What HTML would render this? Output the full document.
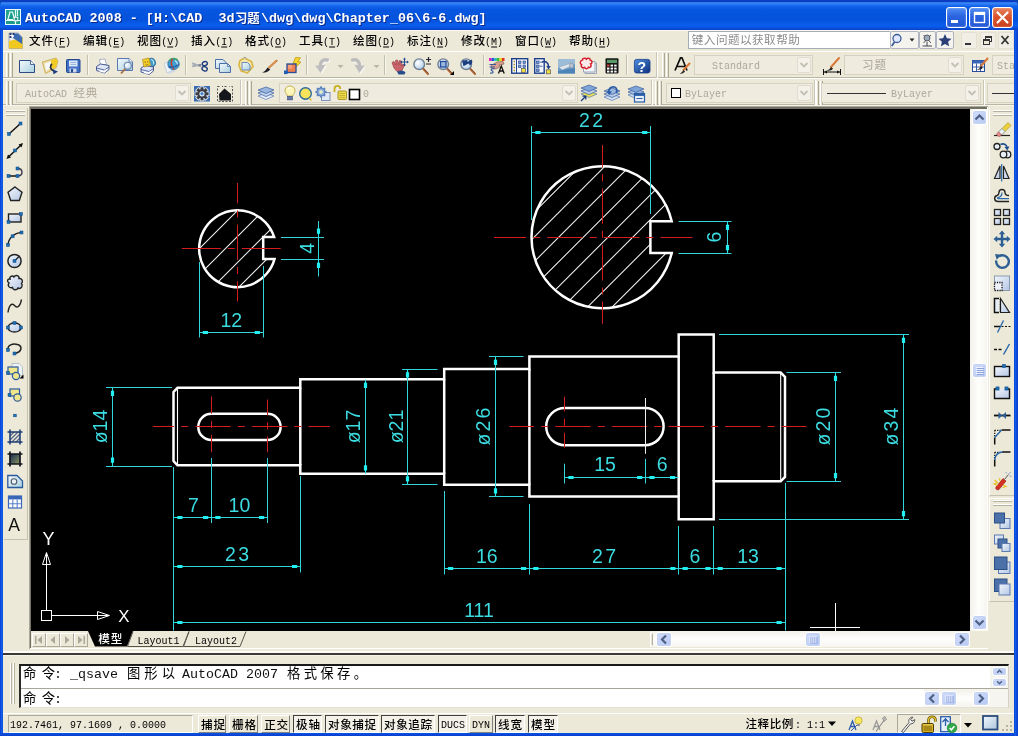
<!DOCTYPE html>
<html><head><meta charset="utf-8"><title>AutoCAD 2008</title>
<style>
html,body{margin:0;padding:0;background:#ece9d8;}
body{width:1018px;height:736px;overflow:hidden;position:relative;font-family:"Liberation Mono",monospace;font-size:10px;}
#root{position:absolute;left:0;top:0;width:1018px;height:736px;overflow:hidden;background:#ece9d8;}
#root div{position:absolute;box-sizing:border-box;}
svg{position:absolute;left:0;top:0;will-change:transform;}
text{white-space:pre;}
</style></head><body><div id="root">
<div style="left:0px;top:0px;width:1018px;height:30px;background:linear-gradient(180deg,#0a3cc4 0px,#0a3cc4 1.5px,#3c8cfa 2.8px,#2c7cf4 4px,#0f60ea 6.5px,#0756e1 10px,#0553dc 20px,#0a5eee 25.5px,#0a52de 28px,#083fc4 30px);"></div><div style="left:0px;top:30px;width:3px;height:706px;background:linear-gradient(90deg,#0a3fd0,#1360ee 60%,#0a50de);"></div><div style="left:1014px;top:30px;width:4px;height:706px;background:linear-gradient(90deg,#0a50de,#1360ee 40%,#0a3fd0);"></div><div style="left:0px;top:733px;width:1018px;height:3px;background:linear-gradient(180deg,#0a52e0,#0a3fd0);"></div><div style="left:946px;top:7px;width:21px;height:21px;background:linear-gradient(180deg,#4f8df5 0%,#2a62e0 45%,#2458d4 100%);border:1px solid #fff;border-radius:3px;box-shadow:inset 0 0 2px rgba(255,255,255,.5);"></div><div style="left:969px;top:7px;width:21px;height:21px;background:linear-gradient(180deg,#4f8df5 0%,#2a62e0 45%,#2458d4 100%);border:1px solid #fff;border-radius:3px;box-shadow:inset 0 0 2px rgba(255,255,255,.5);"></div><div style="left:992px;top:7px;width:21px;height:21px;background:linear-gradient(180deg,#e9845e 0%,#d9542c 45%,#c8401c 100%);border:1px solid #fff;border-radius:3px;box-shadow:inset 0 0 2px rgba(255,255,255,.5);"></div><div style="left:3px;top:30px;width:1011px;height:21px;background:#ece9d8;border-top:1px solid #fbfaf5;"></div><div style="left:688px;top:31px;width:202px;height:18px;background:#fff;border:1px solid #a5acb2;border-right:none;"></div><div style="left:890px;top:31px;width:29px;height:18px;background:#f4f3ee;border:1px solid #b0b4c0;border-radius:2px;"></div><div style="left:919px;top:31px;width:17px;height:18px;background:#f4f3ee;border:1px solid #b0b4c0;border-radius:2px;"></div><div style="left:936px;top:31px;width:18px;height:18px;background:#f4f3ee;border:1px solid #b0b4c0;border-radius:2px;"></div><div style="left:961px;top:32px;width:16px;height:17px;background:#f1efe5;border:1px solid #e4e1d4;border-radius:2px;"></div><div style="left:980px;top:32px;width:16px;height:17px;background:#f1efe5;border:1px solid #e4e1d4;border-radius:2px;"></div><div style="left:998px;top:32px;width:16px;height:17px;background:#f1efe5;border:1px solid #e4e1d4;border-radius:2px;"></div><div style="left:3px;top:51px;width:1011px;height:27px;background:#ece9d8;border-top:1px solid #fff;border-bottom:1px solid #b9b6a3;"></div><div style="left:3px;top:78px;width:1011px;height:27px;background:#ece9d8;border-top:1px solid #fff;border-bottom:1px solid #b9b6a3;"></div><div style="left:6px;top:53px;width:1px;height:24px;background:#fff;"></div><div style="left:7px;top:53px;width:1px;height:24px;background:#e6e3d3;"></div><div style="left:8px;top:53px;width:1px;height:24px;background:#a9a692;"></div><div style="left:10px;top:53px;width:1px;height:24px;background:#fff;"></div><div style="left:11px;top:53px;width:1px;height:24px;background:#e6e3d3;"></div><div style="left:12px;top:53px;width:1px;height:24px;background:#a9a692;"></div><div style="left:6px;top:81px;width:1px;height:24px;background:#fff;"></div><div style="left:7px;top:81px;width:1px;height:24px;background:#e6e3d3;"></div><div style="left:8px;top:81px;width:1px;height:24px;background:#a9a692;"></div><div style="left:10px;top:81px;width:1px;height:24px;background:#fff;"></div><div style="left:11px;top:81px;width:1px;height:24px;background:#e6e3d3;"></div><div style="left:12px;top:81px;width:1px;height:24px;background:#a9a692;"></div><div style="left:87px;top:55px;width:1px;height:20px;background:#c2bfad;"></div><div style="left:88px;top:55px;width:1px;height:20px;background:#f7f6ef;"></div><div style="left:185px;top:55px;width:1px;height:20px;background:#c2bfad;"></div><div style="left:186px;top:55px;width:1px;height:20px;background:#f7f6ef;"></div><div style="left:306px;top:55px;width:1px;height:20px;background:#c2bfad;"></div><div style="left:307px;top:55px;width:1px;height:20px;background:#f7f6ef;"></div><div style="left:384px;top:55px;width:1px;height:20px;background:#c2bfad;"></div><div style="left:385px;top:55px;width:1px;height:20px;background:#f7f6ef;"></div><div style="left:483px;top:55px;width:1px;height:20px;background:#c2bfad;"></div><div style="left:484px;top:55px;width:1px;height:20px;background:#f7f6ef;"></div><div style="left:626px;top:55px;width:1px;height:20px;background:#c2bfad;"></div><div style="left:627px;top:55px;width:1px;height:20px;background:#f7f6ef;"></div><div style="left:656px;top:52px;width:1px;height:26px;background:#c9c6b5;"></div><div style="left:657px;top:52px;width:1px;height:26px;background:#fff;"></div><div style="left:662px;top:53px;width:1px;height:24px;background:#fff;"></div><div style="left:663px;top:53px;width:1px;height:24px;background:#e6e3d3;"></div><div style="left:664px;top:53px;width:1px;height:24px;background:#a9a692;"></div><div style="left:666px;top:53px;width:1px;height:24px;background:#fff;"></div><div style="left:667px;top:53px;width:1px;height:24px;background:#e6e3d3;"></div><div style="left:668px;top:53px;width:1px;height:24px;background:#a9a692;"></div><div style="left:240px;top:80px;width:1px;height:26px;background:#c9c6b5;"></div><div style="left:241px;top:80px;width:1px;height:26px;background:#fff;"></div><div style="left:245px;top:81px;width:1px;height:24px;background:#fff;"></div><div style="left:246px;top:81px;width:1px;height:24px;background:#e6e3d3;"></div><div style="left:247px;top:81px;width:1px;height:24px;background:#a9a692;"></div><div style="left:249px;top:81px;width:1px;height:24px;background:#fff;"></div><div style="left:250px;top:81px;width:1px;height:24px;background:#e6e3d3;"></div><div style="left:251px;top:81px;width:1px;height:24px;background:#a9a692;"></div><div style="left:651px;top:80px;width:1px;height:26px;background:#c9c6b5;"></div><div style="left:652px;top:80px;width:1px;height:26px;background:#fff;"></div><div style="left:655px;top:81px;width:1px;height:24px;background:#fff;"></div><div style="left:656px;top:81px;width:1px;height:24px;background:#e6e3d3;"></div><div style="left:657px;top:81px;width:1px;height:24px;background:#a9a692;"></div><div style="left:659px;top:81px;width:1px;height:24px;background:#fff;"></div><div style="left:660px;top:81px;width:1px;height:24px;background:#e6e3d3;"></div><div style="left:661px;top:81px;width:1px;height:24px;background:#a9a692;"></div><div style="left:814px;top:80px;width:1px;height:26px;background:#c9c6b5;"></div><div style="left:815px;top:80px;width:1px;height:26px;background:#fff;"></div><div style="left:816px;top:81px;width:1px;height:24px;background:#fff;"></div><div style="left:817px;top:81px;width:1px;height:24px;background:#e6e3d3;"></div><div style="left:818px;top:81px;width:1px;height:24px;background:#a9a692;"></div><div style="left:820px;top:81px;width:1px;height:24px;background:#fff;"></div><div style="left:821px;top:81px;width:1px;height:24px;background:#e6e3d3;"></div><div style="left:822px;top:81px;width:1px;height:24px;background:#a9a692;"></div><div style="left:983px;top:80px;width:1px;height:26px;background:#c9c6b5;"></div><div style="left:984px;top:80px;width:1px;height:26px;background:#fff;"></div><div style="left:16px;top:83px;width:175px;height:20px;background:#efecdf;border:1px solid #d6d2c2;"></div><div style="left:175px;top:85px;width:14px;height:16px;background:#f3f1e8;border:1px solid #e0ddd0;border-radius:2px;"></div><div style="left:279px;top:83px;width:299px;height:20px;background:#efecdf;border:1px solid #d6d2c2;"></div><div style="left:562px;top:85px;width:14px;height:16px;background:#f3f1e8;border:1px solid #e0ddd0;border-radius:2px;"></div><div style="left:694px;top:55px;width:119px;height:20px;background:#efecdf;border:1px solid #d6d2c2;"></div><div style="left:797px;top:57px;width:14px;height:16px;background:#f3f1e8;border:1px solid #e0ddd0;border-radius:2px;"></div><div style="left:844px;top:55px;width:120px;height:20px;background:#efecdf;border:1px solid #d6d2c2;"></div><div style="left:948px;top:57px;width:14px;height:16px;background:#f3f1e8;border:1px solid #e0ddd0;border-radius:2px;"></div><div style="left:992px;top:55px;width:30px;height:20px;background:#efecdf;border:1px solid #d6d2c2;"></div><div style="left:666px;top:83px;width:147px;height:20px;background:#efecdf;border:1px solid #d6d2c2;"></div><div style="left:797px;top:85px;width:14px;height:16px;background:#f3f1e8;border:1px solid #e0ddd0;border-radius:2px;"></div><div style="left:821px;top:83px;width:160px;height:20px;background:#efecdf;border:1px solid #d6d2c2;"></div><div style="left:965px;top:85px;width:14px;height:16px;background:#f3f1e8;border:1px solid #e0ddd0;border-radius:2px;"></div><div style="left:987px;top:83px;width:40px;height:20px;background:#efecdf;border:1px solid #d6d2c2;"></div><div style="left:3px;top:106px;width:26px;height:604px;background:#ece9d8;"></div><div style="left:3px;top:105px;width:1011px;height:1px;background:#f6f4ec;"></div><div style="left:4px;top:108px;width:24px;height:432px;background:#ece9d8;border-right:1px solid #c5c2b0;border-bottom:1px solid #c5c2b0;"></div><div style="left:6px;top:110px;width:19px;height:1px;background:#fff;"></div><div style="left:6px;top:111px;width:19px;height:1px;background:#b5b2a0;"></div><div style="left:6px;top:114px;width:19px;height:1px;background:#fff;"></div><div style="left:6px;top:115px;width:19px;height:1px;background:#b5b2a0;"></div><div style="left:988px;top:106px;width:26px;height:604px;background:#ece9d8;"></div><div style="left:989px;top:108px;width:25px;height:388px;background:#ece9d8;border-left:1px solid #fff;border-bottom:1px solid #c5c2b0;"></div><div style="left:993px;top:110px;width:19px;height:1px;background:#fff;"></div><div style="left:993px;top:111px;width:19px;height:1px;background:#b5b2a0;"></div><div style="left:993px;top:114px;width:19px;height:1px;background:#fff;"></div><div style="left:993px;top:115px;width:19px;height:1px;background:#b5b2a0;"></div><div style="left:989px;top:498px;width:25px;height:104px;background:#ece9d8;border-left:1px solid #fff;border-bottom:1px solid #c5c2b0;border-top:1px solid #fff;"></div><div style="left:993px;top:500px;width:19px;height:1px;background:#fff;"></div><div style="left:993px;top:501px;width:19px;height:1px;background:#b5b2a0;"></div><div style="left:993px;top:504px;width:19px;height:1px;background:#fff;"></div><div style="left:993px;top:505px;width:19px;height:1px;background:#b5b2a0;"></div><div style="left:29px;top:106px;width:959px;height:543px;background:#fff;border-left:1px solid #aca899;border-top:1px solid #aca899;"></div><div style="left:30px;top:107px;width:957px;height:541px;background:#716f64;"></div><div style="left:31px;top:109px;width:939px;height:522px;background:#000;"></div><div style="left:970px;top:109px;width:17px;height:522px;background:linear-gradient(90deg,#f3f1ea,#fefefd 50%,#f6f5ef);"></div><div style="left:972px;top:110px;width:15px;height:15px;background:linear-gradient(135deg,#d0dcfb,#b9c9f3);border:1px solid #fff;border-radius:3px;box-shadow:0 0 0 1px #c5d2f0 inset;"></div><div style="left:972px;top:615px;width:15px;height:15px;background:linear-gradient(135deg,#d0dcfb,#b9c9f3);border:1px solid #fff;border-radius:3px;box-shadow:0 0 0 1px #c5d2f0 inset;"></div><div style="left:972px;top:363px;width:15px;height:15px;background:linear-gradient(135deg,#d0dcfb,#b9c9f3);border:1px solid #fff;border-radius:3px;box-shadow:0 0 0 1px #c5d2f0 inset;"></div><div style="left:31px;top:631px;width:957px;height:17px;background:#ece9d8;"></div><div style="left:650px;top:631px;width:320px;height:16px;background:linear-gradient(180deg,#f3f1ea,#fefefd 50%,#f6f5ef);"></div><div style="left:650px;top:633px;width:3px;height:13px;background:#e4e1d2;border:1px solid #fff;border-right:1px solid #b5b2a0;"></div><div style="left:656px;top:632px;width:16px;height:15px;background:linear-gradient(135deg,#d0dcfb,#b9c9f3);border:1px solid #fff;border-radius:3px;box-shadow:0 0 0 1px #c5d2f0 inset;"></div><div style="left:954px;top:632px;width:16px;height:15px;background:linear-gradient(135deg,#d0dcfb,#b9c9f3);border:1px solid #fff;border-radius:3px;box-shadow:0 0 0 1px #c5d2f0 inset;"></div><div style="left:805px;top:632px;width:16px;height:15px;background:linear-gradient(135deg,#d0dcfb,#b9c9f3);border:1px solid #fff;border-radius:3px;box-shadow:0 0 0 1px #c5d2f0 inset;"></div><div style="left:970px;top:631px;width:18px;height:17px;background:#ece9d8;"></div><div style="left:32px;top:633px;width:14px;height:14px;background:#ece9d8;border:1px solid #fff;border-right-color:#aca899;border-bottom-color:#aca899;"></div><div style="left:46px;top:633px;width:14px;height:14px;background:#ece9d8;border:1px solid #fff;border-right-color:#aca899;border-bottom-color:#aca899;"></div><div style="left:60px;top:633px;width:14px;height:14px;background:#ece9d8;border:1px solid #fff;border-right-color:#aca899;border-bottom-color:#aca899;"></div><div style="left:74px;top:633px;width:14px;height:14px;background:#ece9d8;border:1px solid #fff;border-right-color:#aca899;border-bottom-color:#aca899;"></div><div style="left:3px;top:649px;width:1011px;height:64px;background:#ece9d8;"></div><div style="left:3px;top:651px;width:1011px;height:2px;background:#fdfcf8;"></div><div style="left:3px;top:653px;width:1011px;height:2px;background:#3c3a34;"></div><div style="left:3px;top:655px;width:1011px;height:1px;background:#f6f4ea;"></div><div style="left:10px;top:663px;width:1px;height:41px;background:#fff;"></div><div style="left:11px;top:663px;width:1px;height:41px;background:#b5b2a0;"></div><div style="left:13px;top:663px;width:1px;height:41px;background:#fff;"></div><div style="left:14px;top:663px;width:1px;height:41px;background:#b5b2a0;"></div><div style="left:19px;top:664px;width:990px;height:44px;background:#fff;border-left:2px solid #2a2a26;border-top:2px solid #1a1a18;border-right:1px solid #d4d0c8;border-bottom:1px solid #e4e1d6;"></div><div style="left:21px;top:688px;width:987px;height:1px;background:#a8a69a;"></div><div style="left:990px;top:666px;width:18px;height:22px;background:#f6f5ef;"></div><div style="left:992px;top:667px;width:15px;height:9px;background:linear-gradient(135deg,#d0dcfb,#b9c9f3);border:1px solid #fff;border-radius:3px;box-shadow:0 0 0 1px #c5d2f0 inset;"></div><div style="left:992px;top:678px;width:15px;height:9px;background:linear-gradient(135deg,#d0dcfb,#b9c9f3);border:1px solid #fff;border-radius:3px;box-shadow:0 0 0 1px #c5d2f0 inset;"></div><div style="left:924px;top:689px;width:84px;height:18px;background:#f6f5ef;"></div><div style="left:924px;top:690px;width:66px;height:16px;background:linear-gradient(180deg,#f3f1ea,#fefefd 50%,#f6f5ef);"></div><div style="left:924px;top:691px;width:16px;height:15px;background:linear-gradient(135deg,#d0dcfb,#b9c9f3);border:1px solid #fff;border-radius:3px;box-shadow:0 0 0 1px #c5d2f0 inset;"></div><div style="left:941px;top:691px;width:16px;height:15px;background:linear-gradient(135deg,#d0dcfb,#b9c9f3);border:1px solid #fff;border-radius:3px;box-shadow:0 0 0 1px #c5d2f0 inset;"></div><div style="left:973px;top:691px;width:16px;height:15px;background:linear-gradient(135deg,#d0dcfb,#b9c9f3);border:1px solid #fff;border-radius:3px;box-shadow:0 0 0 1px #c5d2f0 inset;"></div><div style="left:3px;top:713px;width:1011px;height:20px;background:#ece9d8;border-top:1px solid #fff;"></div><div style="left:8px;top:715px;width:185px;height:18px;border:1px solid #aca899;border-right-color:#fff;border-bottom-color:#fff;"></div><div style="left:198px;top:715px;width:28px;height:18px;border:1px solid #fff;border-right-color:#808080;border-bottom-color:#808080;"></div><div style="left:229px;top:715px;width:29px;height:18px;border:1px solid #fff;border-right-color:#808080;border-bottom-color:#808080;"></div><div style="left:261px;top:715px;width:29px;height:18px;border:1px solid #fff;border-right-color:#808080;border-bottom-color:#808080;"></div><div style="left:293px;top:715px;width:29px;height:18px;border:1px solid #404040;border-right-color:#fff;border-bottom-color:#fff;background:#f4f2e8;"></div><div style="left:325px;top:715px;width:54px;height:18px;border:1px solid #404040;border-right-color:#fff;border-bottom-color:#fff;background:#f4f2e8;"></div><div style="left:381px;top:715px;width:54px;height:18px;border:1px solid #404040;border-right-color:#fff;border-bottom-color:#fff;background:#f4f2e8;"></div><div style="left:438px;top:715px;width:29px;height:18px;border:1px solid #404040;border-right-color:#fff;border-bottom-color:#fff;background:#f4f2e8;"></div><div style="left:469px;top:715px;width:24px;height:18px;border:1px solid #fff;border-right-color:#808080;border-bottom-color:#808080;"></div><div style="left:495px;top:715px;width:30px;height:18px;border:1px solid #404040;border-right-color:#fff;border-bottom-color:#fff;background:#f4f2e8;"></div><div style="left:528px;top:715px;width:30px;height:18px;border:1px solid #404040;border-right-color:#fff;border-bottom-color:#fff;background:#f4f2e8;"></div><div style="left:897px;top:714px;width:64px;height:19px;border:1px solid #aca899;border-right-color:#fff;border-bottom-color:#fff;"></div><div style="left:0px;top:30px;width:3px;height:706px;background:linear-gradient(90deg,#0a3fd0,#1360ee 60%,#0a50de);"></div><div style="left:1014px;top:30px;width:4px;height:706px;background:linear-gradient(90deg,#0a50de,#1360ee 40%,#0a3fd0);"></div><div style="left:0px;top:733px;width:1018px;height:3px;background:linear-gradient(180deg,#0a52e0,#0a3fd0);"></div>
<svg id="dwg" width="1018" height="736" viewBox="0 0 1018 736">
<g fill="none"><clipPath id="h1"><path d="M274.1 237.0A38.4 38.4 0 1 0 274.5 259.1H263.2V237.0Z"/></clipPath><path d="M195 253.0L280 168.0M195 279.0L280 194.0M195 305.0L280 220.0M195 331.0L280 246.0" stroke="#f4f4f4" stroke-width="1.05" clip-path="url(#h1)"/><path d="M274.1 237.0A38.4 38.4 0 1 0 274.5 259.1H263.2V237.0Z" stroke="#ffffff" stroke-width="2.5" stroke-linejoin="miter"/><path d="M181.9 248.5H220.7M227.8 248.5H234.8M241.9 248.5H280.7" stroke="#d41e1e" stroke-width="1"/><path d="M237.5 183.0V203.3M237.5 210.4V217.5M237.5 224.6V259.9M237.5 267.0V274.1M237.5 281.2V301.5" stroke="#d41e1e" stroke-width="1"/><path d="M199.5 262.0 V337.5" stroke="#35d6da" stroke-width="1"/><path d="M263.5 266.0 V337.5" stroke="#35d6da" stroke-width="1"/><path d="M199.0 332.5 H263.5" stroke="#35d6da" stroke-width="1"/><path d="M199.5 332.5 L202.5 333.1 L203.1 334.1 L208.0 334.1 L208.0 330.9 L203.1 330.9 L202.5 331.9Z" fill="#22eef0"/><path d="M263.2 332.5 L260.2 333.1 L259.6 334.1 L254.7 334.1 L254.7 330.9 L259.6 330.9 L260.2 331.9Z" fill="#22eef0"/><text transform="translate(231.3 319.6)" x="0" y="7" text-anchor="middle" fill="#3bdbe0" stroke="none" style="font-family:'Liberation Sans',sans-serif;font-size:19.5px;">12</text><path d="M281.0 237.5 H324.0" stroke="#35d6da" stroke-width="1"/><path d="M281.0 259.5 H324.0" stroke="#35d6da" stroke-width="1"/><path d="M318.5 221.0 V276.5" stroke="#35d6da" stroke-width="1"/><path d="M318.5 237.0 L319.1 234.0 L320.1 233.4 L320.1 228.5 L316.9 228.5 L316.9 233.4 L317.9 234.0Z" fill="#22eef0"/><path d="M318.5 259.5 L319.1 262.5 L320.1 263.1 L320.1 268.0 L316.9 268.0 L316.9 263.1 L317.9 262.5Z" fill="#22eef0"/><text transform="translate(307.2 248.3) rotate(-90)" x="0" y="7" text-anchor="middle" fill="#3bdbe0" stroke="none" style="font-family:'Liberation Sans',sans-serif;font-size:19.5px;">4</text><clipPath id="h2"><path d="M671.7 221.3A71.0 71.0 0 1 0 671.7 253.1H650.4V221.3Z"/></clipPath><path d="M525 221.5L680 66.5M525 246.2L680 91.2M525 270.9L680 115.9M525 295.5L680 140.5M525 320.2L680 165.2M525 344.9L680 189.9M525 369.6L680 214.6M525 394.2L680 239.2" stroke="#f4f4f4" stroke-width="1.05" clip-path="url(#h2)"/><path d="M671.7 221.3A71.0 71.0 0 1 0 671.7 253.1H650.4V221.3Z" stroke="#ffffff" stroke-width="2.5" stroke-linejoin="miter"/><path d="M494.0 237.5H526.0M533.1 237.5H540.2M547.2 237.5H582.6M589.7 237.5H596.8M603.9 237.5H639.3M646.3 237.5H653.4M660.5 237.5H692.5" stroke="#d41e1e" stroke-width="1"/><path d="M602.5 145.0V167.2M602.5 174.3V181.3M602.5 188.4V223.8M602.5 230.9V237.9M602.5 245.0V280.4M602.5 287.5V294.5M602.5 301.6V323.8" stroke="#d41e1e" stroke-width="1"/><path d="M531.5 126.0 V220.0" stroke="#35d6da" stroke-width="1"/><path d="M650.5 126.0 V214.0" stroke="#35d6da" stroke-width="1"/><path d="M531.5 132.5 H651.0" stroke="#35d6da" stroke-width="1"/><path d="M532.0 132.5 L535.0 133.1 L535.6 134.1 L540.5 134.1 L540.5 130.9 L535.6 130.9 L535.0 131.9Z" fill="#22eef0"/><path d="M650.6 132.5 L647.6 133.1 L647.0 134.1 L642.1 134.1 L642.1 130.9 L647.0 130.9 L647.6 131.9Z" fill="#22eef0"/><text transform="translate(591.0 119.6)" x="-12" y="7" textLength="24" lengthAdjust="spacing" fill="#3bdbe0" stroke="none" style="font-family:'Liberation Sans',sans-serif;font-size:19.5px;">22</text><path d="M678.5 221.5 H731.5" stroke="#35d6da" stroke-width="1"/><path d="M678.5 253.5 H731.5" stroke="#35d6da" stroke-width="1"/><path d="M727.5 221.0 V253.5" stroke="#35d6da" stroke-width="1"/><path d="M727.5 221.5 L728.0 224.5 L729.1 225.1 L729.1 230.0 L725.9 230.0 L725.9 225.1 L727.0 224.5Z" fill="#22eef0"/><path d="M727.5 253.5 L728.0 250.5 L729.1 249.9 L729.1 245.0 L725.9 245.0 L725.9 249.9 L727.0 250.5Z" fill="#22eef0"/><text transform="translate(714.0 237.0) rotate(-90)" x="0" y="7" text-anchor="middle" fill="#3bdbe0" stroke="none" style="font-family:'Liberation Sans',sans-serif;font-size:19.5px;">6</text><path d="M173.5 392L177.5 387.8H300.3V379.3H444.2V369H529.4V356.5H678.7V334.4H713.7V372.6H780.7L785 377V477L780.7 481.3H713.7V519.3H678.7V496.6H529.4V484.7H444.2V473.8H300.3V465.3H177.5L173.5 461Z" stroke="#ffffff" stroke-width="2.5" stroke-linejoin="miter"/><path d="M300.3 387.8V465.3M444.2 379.3V473.8M529.4 369V484.7M678.7 356.5V496.6M713.7 372.6V481.3" stroke="#ffffff" stroke-width="2.5"/><path d="M177.5 388V465M780.7 373V481" stroke="#ffffff" stroke-width="1.1"/><path d="M211.4 413.8H267.5A13.10 13.10 0 0 1 267.5 440.0H211.4A13.10 13.10 0 0 1 211.4 413.8Z" stroke="#ffffff" stroke-width="2.5"/><path d="M564.8 408.0H645.0A18.60 18.60 0 0 1 645.0 445.2H564.8A18.60 18.60 0 0 1 564.8 408.0Z" stroke="#ffffff" stroke-width="2.5"/><path d="M152.9 426.5H174.1M181.2 426.5H188.2M195.3 426.5H230.7M237.8 426.5H244.8M251.9 426.5H287.3M294.4 426.5H301.4M308.5 426.5H329.7" stroke="#d41e1e" stroke-width="1"/><path d="M509.4 426.5H534.1M541.2 426.5H548.3M555.3 426.5H590.7M597.8 426.5H604.9M611.9 426.5H647.3M654.4 426.5H661.5M668.6 426.5H704.0M711.0 426.5H718.1M725.2 426.5H760.6M767.6 426.5H774.7M781.8 426.5H806.5" stroke="#d41e1e" stroke-width="1"/><path d="M211.5 396.5V413.8M211.5 420.9V427.9M211.5 435.0V452.3" stroke="#d41e1e" stroke-width="1"/><path d="M267.5 399.5V415.3M267.5 422.4V429.4M267.5 436.5V452.3" stroke="#d41e1e" stroke-width="1"/><path d="M564.5 396.6V411.5M564.5 418.6V425.7M564.5 432.8V447.7" stroke="#d41e1e" stroke-width="1"/><path d="M645.5 398.0 V453.8" stroke="#f0f0f0" stroke-width="1"/><path d="M112.5 387.5 V466.0" stroke="#35d6da" stroke-width="1"/><path d="M112.5 387.5 L113.0 390.5 L114.1 391.1 L114.1 396.0 L110.9 396.0 L110.9 391.1 L112.0 390.5Z" fill="#22eef0"/><path d="M112.5 466.0 L113.0 463.0 L114.1 462.4 L114.1 457.5 L110.9 457.5 L110.9 462.4 L112.0 463.0Z" fill="#22eef0"/><path d="M106.0 387.5 H172.0" stroke="#35d6da" stroke-width="1"/><path d="M106.0 466.5 H172.0" stroke="#35d6da" stroke-width="1"/><text transform="translate(100.0 426.5) rotate(-90)" x="0" y="7" text-anchor="middle" fill="#3bdbe0" stroke="none" style="font-family:'Liberation Sans',sans-serif;font-size:19.5px;">ø14</text><path d="M365.5 379.5 V473.8" stroke="#35d6da" stroke-width="1"/><path d="M365.5 379.5 L366.1 382.5 L367.1 383.1 L367.1 388.0 L363.9 388.0 L363.9 383.1 L364.9 382.5Z" fill="#22eef0"/><path d="M365.5 473.8 L366.1 470.8 L367.1 470.2 L367.1 465.3 L363.9 465.3 L363.9 470.2 L364.9 470.8Z" fill="#22eef0"/><text transform="translate(352.6 426.5) rotate(-90)" x="0" y="7" text-anchor="middle" fill="#3bdbe0" stroke="none" style="font-family:'Liberation Sans',sans-serif;font-size:19.5px;">ø17</text><path d="M407.5 369.0 V484.7" stroke="#35d6da" stroke-width="1"/><path d="M407.5 369.0 L408.1 372.0 L409.1 372.6 L409.1 377.5 L405.9 377.5 L405.9 372.6 L406.9 372.0Z" fill="#22eef0"/><path d="M407.5 484.7 L408.1 481.7 L409.1 481.1 L409.1 476.2 L405.9 476.2 L405.9 481.1 L406.9 481.7Z" fill="#22eef0"/><path d="M402.0 369.5 H437.5" stroke="#35d6da" stroke-width="1"/><path d="M402.0 484.5 H437.5" stroke="#35d6da" stroke-width="1"/><text transform="translate(396.0 426.5) rotate(-90)" x="0" y="7" text-anchor="middle" fill="#3bdbe0" stroke="none" style="font-family:'Liberation Sans',sans-serif;font-size:19.5px;">ø21</text><path d="M495.5 356.5 V496.8" stroke="#35d6da" stroke-width="1"/><path d="M495.5 356.5 L496.1 359.5 L497.1 360.1 L497.1 365.0 L493.9 365.0 L493.9 360.1 L494.9 359.5Z" fill="#22eef0"/><path d="M495.5 496.8 L496.1 493.8 L497.1 493.2 L497.1 488.3 L493.9 488.3 L493.9 493.2 L494.9 493.8Z" fill="#22eef0"/><path d="M489.0 356.5 H523.5" stroke="#35d6da" stroke-width="1"/><path d="M489.0 496.5 H523.5" stroke="#35d6da" stroke-width="1"/><text transform="translate(482.8 426.5) rotate(-90)" x="-18.9" y="7" textLength="37.8" lengthAdjust="spacing" fill="#3bdbe0" stroke="none" style="font-family:'Liberation Sans',sans-serif;font-size:19.5px;">ø26</text><path d="M835.5 372.6 V481.5" stroke="#35d6da" stroke-width="1"/><path d="M835.5 372.6 L836.0 375.6 L837.1 376.2 L837.1 381.1 L833.9 381.1 L833.9 376.2 L835.0 375.6Z" fill="#22eef0"/><path d="M835.5 481.5 L836.0 478.5 L837.1 477.9 L837.1 473.0 L833.9 473.0 L833.9 477.9 L835.0 478.5Z" fill="#22eef0"/><path d="M786.5 372.5 H841.0" stroke="#35d6da" stroke-width="1"/><path d="M786.5 481.5 H841.0" stroke="#35d6da" stroke-width="1"/><text transform="translate(823.3 426.5) rotate(-90)" x="-18.9" y="7" textLength="37.8" lengthAdjust="spacing" fill="#3bdbe0" stroke="none" style="font-family:'Liberation Sans',sans-serif;font-size:19.5px;">ø20</text><path d="M903.5 334.4 V519.5" stroke="#35d6da" stroke-width="1"/><path d="M903.5 334.4 L904.0 337.4 L905.1 338.0 L905.1 342.9 L901.9 342.9 L901.9 338.0 L903.0 337.4Z" fill="#22eef0"/><path d="M903.5 519.5 L904.0 516.5 L905.1 515.9 L905.1 511.0 L901.9 511.0 L901.9 515.9 L903.0 516.5Z" fill="#22eef0"/><path d="M719.0 334.5 H909.0" stroke="#35d6da" stroke-width="1"/><path d="M719.0 519.5 H909.0" stroke="#35d6da" stroke-width="1"/><text transform="translate(891.2 426.5) rotate(-90)" x="-18.9" y="7" textLength="37.8" lengthAdjust="spacing" fill="#3bdbe0" stroke="none" style="font-family:'Liberation Sans',sans-serif;font-size:19.5px;">ø34</text><path d="M173.5 467.0 V630.5" stroke="#35d6da" stroke-width="1"/><path d="M211.5 458.0 V523.0" stroke="#35d6da" stroke-width="1"/><path d="M267.5 458.0 V523.0" stroke="#35d6da" stroke-width="1"/><path d="M173.5 517.5 H211.5" stroke="#35d6da" stroke-width="1"/><path d="M174.0 517.5 L177.0 518.0 L177.6 519.1 L182.5 519.1 L182.5 515.9 L177.6 515.9 L177.0 517.0Z" fill="#22eef0"/><path d="M211.5 517.5 L208.5 518.0 L207.9 519.1 L203.0 519.1 L203.0 515.9 L207.9 515.9 L208.5 517.0Z" fill="#22eef0"/><text transform="translate(193.3 504.6)" x="0" y="7" text-anchor="middle" fill="#3bdbe0" stroke="none" style="font-family:'Liberation Sans',sans-serif;font-size:19.5px;">7</text><path d="M211.5 517.5 H267.5" stroke="#35d6da" stroke-width="1"/><path d="M212.0 517.5 L215.0 518.0 L215.6 519.1 L220.5 519.1 L220.5 515.9 L215.6 515.9 L215.0 517.0Z" fill="#22eef0"/><path d="M267.5 517.5 L264.5 518.0 L263.9 519.1 L259.0 519.1 L259.0 515.9 L263.9 515.9 L264.5 517.0Z" fill="#22eef0"/><text transform="translate(239.4 504.6)" x="0" y="7" text-anchor="middle" fill="#3bdbe0" stroke="none" style="font-family:'Liberation Sans',sans-serif;font-size:19.5px;">10</text><path d="M300.5 476.0 V572.5" stroke="#35d6da" stroke-width="1"/><path d="M173.5 566.5 H300.5" stroke="#35d6da" stroke-width="1"/><path d="M174.0 566.5 L177.0 567.0 L177.6 568.1 L182.5 568.1 L182.5 564.9 L177.6 564.9 L177.0 566.0Z" fill="#22eef0"/><path d="M300.5 566.5 L297.5 567.0 L296.9 568.1 L292.0 568.1 L292.0 564.9 L296.9 564.9 L297.5 566.0Z" fill="#22eef0"/><text transform="translate(237.0 554.3)" x="-12" y="7" textLength="24" lengthAdjust="spacing" fill="#3bdbe0" stroke="none" style="font-family:'Liberation Sans',sans-serif;font-size:19.5px;">23</text><path d="M564.5 463.7 V483.5" stroke="#35d6da" stroke-width="1"/><path d="M645.5 458.8 V483.5" stroke="#35d6da" stroke-width="1"/><path d="M564.6 477.5 H645.6" stroke="#35d6da" stroke-width="1"/><path d="M565.1 477.5 L568.1 478.1 L568.7 479.1 L573.6 479.1 L573.6 475.9 L568.7 475.9 L568.1 476.9Z" fill="#22eef0"/><path d="M645.6 477.5 L642.6 478.1 L642.0 479.1 L637.1 479.1 L637.1 475.9 L642.0 475.9 L642.6 476.9Z" fill="#22eef0"/><text transform="translate(605.0 464.3)" x="0" y="7" text-anchor="middle" fill="#3bdbe0" stroke="none" style="font-family:'Liberation Sans',sans-serif;font-size:19.5px;">15</text><path d="M645.6 477.5 H678.5" stroke="#35d6da" stroke-width="1"/><path d="M646.1 477.5 L649.1 478.1 L649.7 479.1 L654.6 479.1 L654.6 475.9 L649.7 475.9 L649.1 476.9Z" fill="#22eef0"/><path d="M678.5 477.5 L675.5 478.1 L674.9 479.1 L670.0 479.1 L670.0 475.9 L674.9 475.9 L675.5 476.9Z" fill="#22eef0"/><text transform="translate(662.2 464.3)" x="0" y="7" text-anchor="middle" fill="#3bdbe0" stroke="none" style="font-family:'Liberation Sans',sans-serif;font-size:19.5px;">6</text><path d="M444.5 491.0 V574.5" stroke="#35d6da" stroke-width="1"/><path d="M529.5 504.0 V574.5" stroke="#35d6da" stroke-width="1"/><path d="M678.5 526.0 V574.5" stroke="#35d6da" stroke-width="1"/><path d="M713.5 526.0 V574.5" stroke="#35d6da" stroke-width="1"/><path d="M785.5 483.0 V630.5" stroke="#35d6da" stroke-width="1"/><path d="M444.2 568.5 H529.5" stroke="#35d6da" stroke-width="1"/><path d="M444.7 568.5 L447.7 569.0 L448.3 570.1 L453.2 570.1 L453.2 566.9 L448.3 566.9 L447.7 568.0Z" fill="#22eef0"/><path d="M529.5 568.5 L526.5 569.0 L525.9 570.1 L521.0 570.1 L521.0 566.9 L525.9 566.9 L526.5 568.0Z" fill="#22eef0"/><text transform="translate(486.8 556.0)" x="0" y="7" text-anchor="middle" fill="#3bdbe0" stroke="none" style="font-family:'Liberation Sans',sans-serif;font-size:19.5px;">16</text><path d="M529.5 568.5 H678.8" stroke="#35d6da" stroke-width="1"/><path d="M530.0 568.5 L533.0 569.0 L533.6 570.1 L538.5 570.1 L538.5 566.9 L533.6 566.9 L533.0 568.0Z" fill="#22eef0"/><path d="M678.8 568.5 L675.8 569.0 L675.2 570.1 L670.3 570.1 L670.3 566.9 L675.2 566.9 L675.8 568.0Z" fill="#22eef0"/><text transform="translate(604.0 556.0)" x="-12" y="7" textLength="24" lengthAdjust="spacing" fill="#3bdbe0" stroke="none" style="font-family:'Liberation Sans',sans-serif;font-size:19.5px;">27</text><path d="M678.8 568.5 H713.8" stroke="#35d6da" stroke-width="1"/><path d="M679.3 568.5 L682.3 569.0 L682.9 570.1 L687.8 570.1 L687.8 566.9 L682.9 566.9 L682.3 568.0Z" fill="#22eef0"/><path d="M713.8 568.5 L710.8 569.0 L710.2 570.1 L705.3 570.1 L705.3 566.9 L710.2 566.9 L710.8 568.0Z" fill="#22eef0"/><text transform="translate(695.0 556.0)" x="0" y="7" text-anchor="middle" fill="#3bdbe0" stroke="none" style="font-family:'Liberation Sans',sans-serif;font-size:19.5px;">6</text><path d="M713.8 568.5 H785.0" stroke="#35d6da" stroke-width="1"/><path d="M714.3 568.5 L717.3 569.0 L717.9 570.1 L722.8 570.1 L722.8 566.9 L717.9 566.9 L717.3 568.0Z" fill="#22eef0"/><path d="M785.0 568.5 L782.0 569.0 L781.4 570.1 L776.5 570.1 L776.5 566.9 L781.4 566.9 L782.0 568.0Z" fill="#22eef0"/><text transform="translate(748.0 556.0)" x="0" y="7" text-anchor="middle" fill="#3bdbe0" stroke="none" style="font-family:'Liberation Sans',sans-serif;font-size:19.5px;">13</text><path d="M173.5 622.5 H785.0" stroke="#35d6da" stroke-width="1"/><path d="M174.0 622.5 L177.0 623.0 L177.6 624.1 L182.5 624.1 L182.5 620.9 L177.6 620.9 L177.0 622.0Z" fill="#22eef0"/><path d="M785.0 622.5 L782.0 623.0 L781.4 624.1 L776.5 624.1 L776.5 620.9 L781.4 620.9 L782.0 622.0Z" fill="#22eef0"/><text transform="translate(479.0 610.4)" x="0" y="7" text-anchor="middle" fill="#3bdbe0" stroke="none" style="font-family:'Liberation Sans',sans-serif;font-size:19.5px;">111</text><g stroke="#fff" stroke-width="1"><rect x="41.5" y="610.5" width="10" height="10"/><path d="M52 615.5H97M97.5 611.5L109.5 615.5L97.5 619.5ZM98 615.5H109"/><path d="M46.5 610V565M42.5 564.5L46.5 552.5L50.5 564.5ZM46.5 564V553"/><text x="123.75" y="622" text-anchor="middle" fill="#fff" stroke="none" style="font-family:'Liberation Sans',sans-serif;font-size:16.8px;">X</text><text x="48.5" y="545" text-anchor="middle" fill="#fff" stroke="none" style="font-family:'Liberation Sans',sans-serif;font-size:18px;">Y</text></g><path d="M835.5 603V631M810 627.5H860" stroke="#fff" stroke-width="1"/></g>
</svg>
<svg id="ui" width="1018" height="736" viewBox="0 0 1018 736">
<rect x="5.5" y="9.5" width="15" height="15" fill="#1f9a8a" stroke="#e8fff8" stroke-width="1"/><rect x="6" y="10" width="14" height="6" fill="#2aa795" opacity=".7"/><path d="M8 19 L10 12 L12.5 12 L14.5 19 M7 19.5 H13 M15.5 10 V24 M6 20.5 H20 M17.5 10 V16" stroke="#e6fff6" stroke-width="1.2" fill="none"/><rect x="14.2" y="17.2" width="3.6" height="3.6" fill="#1f9a8a" stroke="#fff" stroke-width="1"/><text transform="translate(26 23.0)" fill="#0a2a8c" style="font-family:'Liberation Mono',monospace;font-size:13.43px;font-weight:bold;" xml:space="preserve"  textLength="209.51" lengthAdjust="spacing">AutoCAD 2008 - [H:\CAD  3d</text><text transform="translate(25 22.0)" fill="#fff" style="font-family:'Liberation Mono',monospace;font-size:13.43px;font-weight:bold;" xml:space="preserve"  textLength="209.51" lengthAdjust="spacing">AutoCAD 2008 - [H:\CAD  3d</text><text transform="translate(236 23.6)" fill="#0a2a8c" style="font-family:'Liberation Mono','Noto Sans CJK SC',monospace;font-size:12.4px;font-weight:bold;" textLength="24.6" lengthAdjust="spacing">习题</text><text transform="translate(235 22.6)" fill="#fff" style="font-family:'Liberation Mono','Noto Sans CJK SC',monospace;font-size:12.4px;font-weight:bold;" textLength="24.6" lengthAdjust="spacing">习题</text><text transform="translate(262 23.0)" fill="#0a2a8c" style="font-family:'Liberation Mono',monospace;font-size:13.43px;font-weight:bold;" xml:space="preserve"  textLength="225.62" lengthAdjust="spacing">\dwg\dwg\Chapter_06\6-6.dwg]</text><text transform="translate(261 22.0)" fill="#fff" style="font-family:'Liberation Mono',monospace;font-size:13.43px;font-weight:bold;" xml:space="preserve"  textLength="225.62" lengthAdjust="spacing">\dwg\dwg\Chapter_06\6-6.dwg]</text><rect x="951" y="20" width="7" height="3" fill="#fff"/><rect x="974.5" y="12.5" width="10" height="10" fill="none" stroke="#fff" stroke-width="1.4"/><rect x="974" y="12" width="11" height="3" fill="#fff"/><path d="M997.5 12.5 L1007.5 22.5 M1007.5 12.5 L997.5 22.5" stroke="#fff" stroke-width="2.2" stroke-linecap="round"/><text x="29" y="45" fill="#000" style="font-family:'Liberation Mono','Noto Sans CJK SC',monospace;font-size:11.6px;font-weight:500;" textLength="24" lengthAdjust="spacing">文件</text><text transform="translate(53.1 45) scale(0.862 1)" fill="#000" style="font-family:'Liberation Mono',monospace;font-size:11.6px;font-weight:normal;" xml:space="preserve"  textLength="20.88" lengthAdjust="spacing">(F)</text><rect x="59.1" y="46.5" width="6" height="1" fill="#000"/><text x="83" y="45" fill="#000" style="font-family:'Liberation Mono','Noto Sans CJK SC',monospace;font-size:11.6px;font-weight:500;" textLength="24" lengthAdjust="spacing">编辑</text><text transform="translate(107.2 45) scale(0.862 1)" fill="#000" style="font-family:'Liberation Mono',monospace;font-size:11.6px;font-weight:normal;" xml:space="preserve"  textLength="20.88" lengthAdjust="spacing">(E)</text><rect x="113.2" y="46.5" width="6" height="1" fill="#000"/><text x="137" y="45" fill="#000" style="font-family:'Liberation Mono','Noto Sans CJK SC',monospace;font-size:11.6px;font-weight:500;" textLength="24" lengthAdjust="spacing">视图</text><text transform="translate(161.2 45) scale(0.862 1)" fill="#000" style="font-family:'Liberation Mono',monospace;font-size:11.6px;font-weight:normal;" xml:space="preserve"  textLength="20.88" lengthAdjust="spacing">(V)</text><rect x="167.2" y="46.5" width="6" height="1" fill="#000"/><text x="191" y="45" fill="#000" style="font-family:'Liberation Mono','Noto Sans CJK SC',monospace;font-size:11.6px;font-weight:500;" textLength="24" lengthAdjust="spacing">插入</text><text transform="translate(215.2 45) scale(0.862 1)" fill="#000" style="font-family:'Liberation Mono',monospace;font-size:11.6px;font-weight:normal;" xml:space="preserve"  textLength="20.88" lengthAdjust="spacing">(I)</text><rect x="221.2" y="46.5" width="6" height="1" fill="#000"/><text x="245" y="45" fill="#000" style="font-family:'Liberation Mono','Noto Sans CJK SC',monospace;font-size:11.6px;font-weight:500;" textLength="24" lengthAdjust="spacing">格式</text><text transform="translate(269.1 45) scale(0.862 1)" fill="#000" style="font-family:'Liberation Mono',monospace;font-size:11.6px;font-weight:normal;" xml:space="preserve"  textLength="20.88" lengthAdjust="spacing">(O)</text><rect x="275.1" y="46.5" width="6" height="1" fill="#000"/><text x="299" y="45" fill="#000" style="font-family:'Liberation Mono','Noto Sans CJK SC',monospace;font-size:11.6px;font-weight:500;" textLength="24" lengthAdjust="spacing">工具</text><text transform="translate(323.1 45) scale(0.862 1)" fill="#000" style="font-family:'Liberation Mono',monospace;font-size:11.6px;font-weight:normal;" xml:space="preserve"  textLength="20.88" lengthAdjust="spacing">(T)</text><rect x="329.1" y="46.5" width="6" height="1" fill="#000"/><text x="353" y="45" fill="#000" style="font-family:'Liberation Mono','Noto Sans CJK SC',monospace;font-size:11.6px;font-weight:500;" textLength="24" lengthAdjust="spacing">绘图</text><text transform="translate(377.1 45) scale(0.862 1)" fill="#000" style="font-family:'Liberation Mono',monospace;font-size:11.6px;font-weight:normal;" xml:space="preserve"  textLength="20.88" lengthAdjust="spacing">(D)</text><rect x="383.1" y="46.5" width="6" height="1" fill="#000"/><text x="407" y="45" fill="#000" style="font-family:'Liberation Mono','Noto Sans CJK SC',monospace;font-size:11.6px;font-weight:500;" textLength="24" lengthAdjust="spacing">标注</text><text transform="translate(431.1 45) scale(0.862 1)" fill="#000" style="font-family:'Liberation Mono',monospace;font-size:11.6px;font-weight:normal;" xml:space="preserve"  textLength="20.88" lengthAdjust="spacing">(N)</text><rect x="437.1" y="46.5" width="6" height="1" fill="#000"/><text x="461" y="45" fill="#000" style="font-family:'Liberation Mono','Noto Sans CJK SC',monospace;font-size:11.6px;font-weight:500;" textLength="24" lengthAdjust="spacing">修改</text><text transform="translate(485.1 45) scale(0.862 1)" fill="#000" style="font-family:'Liberation Mono',monospace;font-size:11.6px;font-weight:normal;" xml:space="preserve"  textLength="20.88" lengthAdjust="spacing">(M)</text><rect x="491.1" y="46.5" width="6" height="1" fill="#000"/><text x="515" y="45" fill="#000" style="font-family:'Liberation Mono','Noto Sans CJK SC',monospace;font-size:11.6px;font-weight:500;" textLength="24" lengthAdjust="spacing">窗口</text><text transform="translate(539.1 45) scale(0.862 1)" fill="#000" style="font-family:'Liberation Mono',monospace;font-size:11.6px;font-weight:normal;" xml:space="preserve"  textLength="20.88" lengthAdjust="spacing">(W)</text><rect x="545.1" y="46.5" width="6" height="1" fill="#000"/><text x="569" y="45" fill="#000" style="font-family:'Liberation Mono','Noto Sans CJK SC',monospace;font-size:11.6px;font-weight:500;" textLength="24" lengthAdjust="spacing">帮助</text><text transform="translate(593.1 45) scale(0.862 1)" fill="#000" style="font-family:'Liberation Mono',monospace;font-size:11.6px;font-weight:normal;" xml:space="preserve"  textLength="20.88" lengthAdjust="spacing">(H)</text><rect x="599.1" y="46.5" width="6" height="1" fill="#000"/><path d="M9 33 H18 L22.5 37.5 V48.5 H9 Z" fill="#e8ecf4" stroke="#8a94a8" stroke-width=".8"/><path d="M9 41 L22.5 37.8 V48.5 H9Z" fill="#f0c820"/><path d="M13 33.5 H18 L22 37.5 V44 L13 38Z" fill="#3a6ab0"/><rect x="9.5" y="33" width="2" height="2" fill="#223a78"/><rect x="12.5" y="33" width="2" height="2" fill="#223a78"/><rect x="9.5" y="36" width="2" height="2" fill="#223a78"/><circle cx="12.7" cy="36" r="1.2" fill="#fff"/><text x="691.8" y="44.2" fill="#8c8c8c" style="font-family:'Liberation Mono','Noto Sans CJK SC',monospace;font-size:11.6px;font-weight:normal;" textLength="108" lengthAdjust="spacing">键入问题以获取帮助</text><circle cx="897" cy="38.5" r="4" fill="#dfe8ff" stroke="#3c5a9a" stroke-width="1.3"/><path d="M894.5 42 L891.8 46" stroke="#3c5a9a" stroke-width="1.8"/><path d="M909.5 38.5 h5 l-2.5 3z" fill="#222"/><path d="M923.5 35 L931 43 M931 35 L923.5 43" stroke="#555" stroke-width="1"/><circle cx="927" cy="38" r="3" fill="#9ab" stroke="#445" stroke-width=".8"/><path d="M922.5 46 H932 M927 42 V46" stroke="#445" stroke-width="1"/><path d="M945 34 l1.9 4.2 4.6 .5 -3.4 3.1 1 4.5 -4.1 -2.4 -4.1 2.4 1 -4.5 -3.4 -3.1 4.6 -.5z" fill="#2a3f78"/><rect x="965" y="43" width="6" height="2" fill="#333"/><rect x="985.5" y="36.5" width="6" height="5" fill="none" stroke="#333" stroke-width="1"/><rect x="985" y="36" width="7" height="2" fill="#333"/><rect x="983.5" y="39.5" width="6" height="5" fill="#ece9d8" stroke="#333" stroke-width="1"/><rect x="983" y="39" width="7" height="2" fill="#333"/><path d="M1001.5 36 L1008.5 44 M1008.5 36 L1001.5 44" stroke="#333" stroke-width="1.8"/><path d="M178.5 91.0 l3.5 3.5 l3.5 -3.5" fill="none" stroke="#c4c1b4" stroke-width="1.8"/><text transform="translate(25 97) scale(0.862 1)" fill="#aca899" style="font-family:'Liberation Mono',monospace;font-size:11.6px;font-weight:normal;" xml:space="preserve"  textLength="48.72" lengthAdjust="spacing">AutoCAD</text><text x="73.4" y="97" fill="#aca899" style="font-family:'Liberation Mono','Noto Sans CJK SC',monospace;font-size:11.6px;font-weight:normal;" textLength="24" lengthAdjust="spacing">经典</text><path d="M565.5 91.0 l3.5 3.5 l3.5 -3.5" fill="none" stroke="#c4c1b4" stroke-width="1.8"/><text transform="translate(363 97) scale(0.862 1)" fill="#aca899" style="font-family:'Liberation Mono',monospace;font-size:11.6px;font-weight:normal;" xml:space="preserve" >0</text><path d="M800.5 63.0 l3.5 3.5 l3.5 -3.5" fill="none" stroke="#c4c1b4" stroke-width="1.8"/><text transform="translate(712 69) scale(0.862 1)" fill="#aca899" style="font-family:'Liberation Mono',monospace;font-size:11.6px;font-weight:normal;" xml:space="preserve"  textLength="55.68" lengthAdjust="spacing">Standard</text><path d="M951.5 63.0 l3.5 3.5 l3.5 -3.5" fill="none" stroke="#c4c1b4" stroke-width="1.8"/><text x="862" y="69" fill="#aca899" style="font-family:'Liberation Mono','Noto Sans CJK SC',monospace;font-size:11.6px;font-weight:normal;" textLength="24" lengthAdjust="spacing">习题</text><text transform="translate(997 69) scale(0.862 1)" fill="#aca899" style="font-family:'Liberation Mono',monospace;font-size:11.6px;font-weight:normal;" xml:space="preserve"  textLength="20.88" lengthAdjust="spacing">Sta</text><path d="M800.5 91.0 l3.5 3.5 l3.5 -3.5" fill="none" stroke="#c4c1b4" stroke-width="1.8"/><rect x="671.5" y="88.5" width="9" height="9" fill="#fff" stroke="#000"/><text transform="translate(685 97) scale(0.862 1)" fill="#aca899" style="font-family:'Liberation Mono',monospace;font-size:11.6px;font-weight:normal;" xml:space="preserve"  textLength="48.72" lengthAdjust="spacing">ByLayer</text><path d="M968.5 91.0 l3.5 3.5 l3.5 -3.5" fill="none" stroke="#c4c1b4" stroke-width="1.8"/><rect x="827" y="93" width="59" height="1" fill="#333"/><text transform="translate(891 97) scale(0.862 1)" fill="#aca899" style="font-family:'Liberation Mono',monospace;font-size:11.6px;font-weight:normal;" xml:space="preserve"  textLength="48.72" lengthAdjust="spacing">ByLayer</text><rect x="992" y="93" width="22" height="1" fill="#333"/><path d="M975.5 119.5 L979.5 115.5 L983.5 119.5" fill="none" stroke="#4d6185" stroke-width="2.2"/><path d="M975.5 620.5 L979.5 624.5 L983.5 620.5" fill="none" stroke="#4d6185" stroke-width="2.2"/><rect x="976.0" y="367.0" width="7" height="1" fill="#eef3ff"/><rect x="977.0" y="368.0" width="7" height="1" fill="#8ca2da"/><rect x="976.0" y="369.0" width="7" height="1" fill="#eef3ff"/><rect x="977.0" y="370.0" width="7" height="1" fill="#8ca2da"/><rect x="976.0" y="371.0" width="7" height="1" fill="#eef3ff"/><rect x="977.0" y="372.0" width="7" height="1" fill="#8ca2da"/><rect x="976.0" y="373.0" width="7" height="1" fill="#eef3ff"/><rect x="977.0" y="374.0" width="7" height="1" fill="#8ca2da"/><path d="M666.0 635.5 L662.0 639.5 L666.0 643.5" fill="none" stroke="#4d6185" stroke-width="2.2"/><path d="M960.0 635.5 L964.0 639.5 L960.0 643.5" fill="none" stroke="#4d6185" stroke-width="2.2"/><rect x="809.5" y="636.0" width="1" height="7" fill="#eef3ff"/><rect x="810.5" y="637.0" width="1" height="7" fill="#8ca2da"/><rect x="811.5" y="636.0" width="1" height="7" fill="#eef3ff"/><rect x="812.5" y="637.0" width="1" height="7" fill="#8ca2da"/><rect x="813.5" y="636.0" width="1" height="7" fill="#eef3ff"/><rect x="814.5" y="637.0" width="1" height="7" fill="#8ca2da"/><rect x="815.5" y="636.0" width="1" height="7" fill="#eef3ff"/><rect x="816.5" y="637.0" width="1" height="7" fill="#8ca2da"/><rect x="35" y="636" width="1.5" height="8" fill="#aca899"/><path d="M42 636 L37.5 640 L42 644Z" fill="#aca899"/><path d="M55 636 L50.5 640 L55 644Z" fill="#aca899"/><path d="M65 636 L69.5 640 L65 644Z" fill="#aca899"/><rect x="83.5" y="636" width="1.5" height="8" fill="#aca899"/><path d="M78 636 L82.5 640 L78 644Z" fill="#aca899"/><path d="M88 631 H133 L127 646.5 H95 Z" fill="#000"/><text x="98.3" y="643.4" fill="#fff" style="font-family:'Liberation Mono','Noto Sans CJK SC',monospace;font-size:11.6px;font-weight:500;" textLength="24" lengthAdjust="spacing">模型</text><path d="M133 631.5 L127.5 646.5 H183 L189 631.5" fill="none" stroke="#55534a" stroke-width="1"/><path d="M189 631.5 L183.5 646.5 H240 L246 631.5" fill="none" stroke="#55534a" stroke-width="1"/><text transform="translate(137.5 643.6) scale(0.862 1)" fill="#000" style="font-family:'Liberation Mono',monospace;font-size:11.6px;font-weight:normal;" xml:space="preserve"  textLength="48.72" lengthAdjust="spacing">Layout1</text><text transform="translate(195 643.6) scale(0.862 1)" fill="#000" style="font-family:'Liberation Mono',monospace;font-size:11.6px;font-weight:normal;" xml:space="preserve"  textLength="48.72" lengthAdjust="spacing">Layout2</text><text x="23" y="678.2" fill="#000" style="font-family:'Liberation Mono','Noto Sans CJK SC',monospace;font-size:13.33px;font-weight:normal;" textLength="32" lengthAdjust="spacing">命令</text><text transform="translate(54 678.2)" fill="#111" style="font-family:'Liberation Mono',monospace;font-size:13.33px;font-weight:normal;" xml:space="preserve"  textLength="71.98" lengthAdjust="spacing">: _qsave </text><text x="127" y="678.2" fill="#000" style="font-family:'Liberation Mono','Noto Sans CJK SC',monospace;font-size:13.33px;font-weight:normal;" textLength="48" lengthAdjust="spacing">图形以</text><text transform="translate(174 678.2)" fill="#111" style="font-family:'Liberation Mono',monospace;font-size:13.33px;font-weight:normal;" xml:space="preserve"  textLength="111.97" lengthAdjust="spacing"> AutoCAD 2007 </text><text x="287" y="678.2" fill="#000" style="font-family:'Liberation Mono','Noto Sans CJK SC',monospace;font-size:13.33px;font-weight:normal;" textLength="80" lengthAdjust="spacing">格式保存。</text><text x="23" y="703.2" fill="#000" style="font-family:'Liberation Mono','Noto Sans CJK SC',monospace;font-size:13.33px;font-weight:normal;" textLength="32" lengthAdjust="spacing">命令</text><text transform="translate(54 703.2)" fill="#111" style="font-family:'Liberation Mono',monospace;font-size:13.33px;font-weight:normal;" xml:space="preserve" >:</text><path d="M997.1 672.7 L999.5 670.3 L1001.9 672.7" fill="none" stroke="#4d6185" stroke-width="1.5"/><path d="M997.1 681.3 L999.5 683.7 L1001.9 681.3" fill="none" stroke="#4d6185" stroke-width="1.5"/><path d="M934.0 694.5 L930.0 698.5 L934.0 702.5" fill="none" stroke="#4d6185" stroke-width="2.2"/><rect x="945.5" y="695.0" width="1" height="7" fill="#eef3ff"/><rect x="946.5" y="696.0" width="1" height="7" fill="#8ca2da"/><rect x="947.5" y="695.0" width="1" height="7" fill="#eef3ff"/><rect x="948.5" y="696.0" width="1" height="7" fill="#8ca2da"/><rect x="949.5" y="695.0" width="1" height="7" fill="#eef3ff"/><rect x="950.5" y="696.0" width="1" height="7" fill="#8ca2da"/><rect x="951.5" y="695.0" width="1" height="7" fill="#eef3ff"/><rect x="952.5" y="696.0" width="1" height="7" fill="#8ca2da"/><path d="M979.0 694.5 L983.0 698.5 L979.0 702.5" fill="none" stroke="#4d6185" stroke-width="2.2"/><text transform="translate(10 728) scale(0.862 1)" fill="#000" style="font-family:'Liberation Mono',monospace;font-size:11.6px;font-weight:normal;" xml:space="preserve"  textLength="180.96" lengthAdjust="spacing">192.7461, 97.1609 , 0.0000</text><text x="201" y="728.5" fill="#000" style="font-family:'Liberation Mono','Noto Sans CJK SC',monospace;font-size:11.6px;font-weight:500;" textLength="24" lengthAdjust="spacing">捕捉</text><text x="232" y="728.5" fill="#000" style="font-family:'Liberation Mono','Noto Sans CJK SC',monospace;font-size:11.6px;font-weight:500;" textLength="24" lengthAdjust="spacing">栅格</text><text x="264.2" y="728.5" fill="#000" style="font-family:'Liberation Mono','Noto Sans CJK SC',monospace;font-size:11.6px;font-weight:500;" textLength="24" lengthAdjust="spacing">正交</text><text x="296" y="728.5" fill="#000" style="font-family:'Liberation Mono','Noto Sans CJK SC',monospace;font-size:11.6px;font-weight:500;" textLength="24" lengthAdjust="spacing">极轴</text><text x="328" y="728.5" fill="#000" style="font-family:'Liberation Mono','Noto Sans CJK SC',monospace;font-size:11.6px;font-weight:500;" textLength="48" lengthAdjust="spacing">对象捕捉</text><text x="384" y="728.5" fill="#000" style="font-family:'Liberation Mono','Noto Sans CJK SC',monospace;font-size:11.6px;font-weight:500;" textLength="48" lengthAdjust="spacing">对象追踪</text><text transform="translate(441 728) scale(0.862 1)" fill="#000" style="font-family:'Liberation Mono',monospace;font-size:11.6px;font-weight:normal;" xml:space="preserve"  textLength="27.84" lengthAdjust="spacing">DUCS</text><text transform="translate(472 728) scale(0.862 1)" fill="#000" style="font-family:'Liberation Mono',monospace;font-size:11.6px;font-weight:normal;" xml:space="preserve"  textLength="20.88" lengthAdjust="spacing">DYN</text><text x="498" y="728.5" fill="#000" style="font-family:'Liberation Mono','Noto Sans CJK SC',monospace;font-size:11.6px;font-weight:500;" textLength="24" lengthAdjust="spacing">线宽</text><text x="531" y="728.5" fill="#000" style="font-family:'Liberation Mono','Noto Sans CJK SC',monospace;font-size:11.6px;font-weight:500;" textLength="24" lengthAdjust="spacing">模型</text><text x="745.4" y="728.2" fill="#000" style="font-family:'Liberation Mono','Noto Sans CJK SC',monospace;font-size:11.6px;font-weight:500;" textLength="48" lengthAdjust="spacing">注释比例</text><text transform="translate(795 728) scale(0.862 1)" fill="#000" style="font-family:'Liberation Mono',monospace;font-size:11.6px;font-weight:normal;" xml:space="preserve"  textLength="34.80" lengthAdjust="spacing">: 1:1</text><path d="M828 721.5 h8 l-4 4.5z" fill="#000"/><path d="M964 723 h8 l-4 4.5z" fill="#000"/><defs><linearGradient id="gcs" x1="0" y1="0" x2="1" y2="1"><stop offset="0" stop-color="#f4f8fc"/><stop offset="1" stop-color="#a9c4dc"/></linearGradient></defs><rect x="983" y="716" width="14.5" height="13.5" fill="url(#gcs)" stroke="#2c4c7c" stroke-width="1.8"/><rect x="1010" y="729" width="2" height="2" fill="#b8b4a2"/><rect x="1006" y="729" width="2" height="2" fill="#b8b4a2"/><rect x="1002" y="729" width="2" height="2" fill="#b8b4a2"/><rect x="1010" y="725" width="2" height="2" fill="#b8b4a2"/><rect x="1006" y="725" width="2" height="2" fill="#b8b4a2"/><rect x="1010" y="721" width="2" height="2" fill="#b8b4a2"/><defs><linearGradient id="gpage" x1="0" y1="0" x2="1" y2="1"><stop offset="0" stop-color="#f4f9fd"/><stop offset="1" stop-color="#a9d0df"/></linearGradient><linearGradient id="gblue" x1="0" y1="0" x2="1" y2="1"><stop offset="0" stop-color="#f2f6fc"/><stop offset="1" stop-color="#b4c6e4"/></linearGradient><linearGradient id="ghelp" x1="0" y1="0" x2="1" y2="1"><stop offset="0" stop-color="#4f8fe0"/><stop offset="1" stop-color="#0c2f7c"/></linearGradient><linearGradient id="ggrad" x1="0" y1="0" x2="1" y2="1"><stop offset="0" stop-color="#1a2a50"/><stop offset=".6" stop-color="#5a6a58"/><stop offset="1" stop-color="#9a9a60"/></linearGradient><radialGradient id="glens" cx=".35" cy=".35" r=".8"><stop offset="0" stop-color="#fff"/><stop offset="1" stop-color="#a8c8e8"/></radialGradient></defs><g transform="translate(19 60)"><path d="M.5 .5H11.5L15.5 4.5V12.5H.5Z" fill="url(#gpage)" stroke="#2c4a86"/><path d="M11.5 .5V4.5H15.5" fill="#eef6fb" stroke="#2c4a86" stroke-width=".8"/></g><g transform="translate(42 57)"><path d="M.3 5L9 2.5L14 1L16 4L14 11L3.5 16.5Z" fill="#ecd9a0" stroke="#c4a448" stroke-width=".8"/><path d="M2.6 6.6L9 4.2L8 11L4.2 14.3Z" fill="#f6f7f8"/><path d="M9.2 3.2L14 1.5L15.7 4.1L13.7 10.6L8.6 12.3Z" fill="#f2cb22"/><path d="M10 6.8C7.6 8.8 8 12.4 11.2 13.4" fill="none" stroke="#20283c" stroke-width="1.7"/><path d="M16 14.6L10.4 12.2L11.6 17.2Z" fill="#1d3f80"/></g><g transform="translate(66 59)"><rect x=".5" y=".5" width="13.5" height="13" rx="1" fill="#3f6fc6" stroke="#24478e"/><rect x="3" y="1.5" width="8.5" height="6" fill="#dbe8f8"/><path d="M4.5 3.5H10M4.5 5.5H10" stroke="#8aa8d8" stroke-width=".8"/><rect x="3.5" y="9.5" width="7" height="4" fill="#c9d6ea"/><rect x="5" y="10" width="2" height="3.5" fill="#24478e"/></g><g transform="translate(95.5 58.5)"><path d="M4 1L9.5 .5L11 6L5 7Z" fill="#fff" stroke="#8a94b4" stroke-width=".7"/><path d="M1 8L5 5.5L13.5 7L13.5 11L9 14.5L1 12Z" fill="#dfe6f6" stroke="#3a4c8a" stroke-width=".9"/><path d="M1 9.5L9 11.5L13.5 8.5" fill="none" stroke="#3a4c8a" stroke-width=".8"/><path d="M4 12.2L8.5 13.4L11.5 11" stroke="#fff" stroke-width="1.6" fill="none"/></g><g transform="translate(117 58)"><path d="M.5 .5H12L15.5 4V12.5H.5Z" fill="url(#gpage)" stroke="#5b78ae"/><path d="M12 .5V4H15.5" fill="#eef6fb" stroke="#5b78ae" stroke-width=".8"/><path d="M8.5 10.5L4 15.5" stroke="#a8683a" stroke-width="1.8"/><circle cx="10.8" cy="7.8" r="3.6" fill="url(#glens)" stroke="#6c86a8" stroke-width="1.1"/></g><g transform="translate(140 57)"><path d="M9 2C12 0 15.5 2 15.5 6C15.5 9 13 10.5 11 10" fill="#3b9ac8" stroke="#1e5a8c" stroke-width=".8"/><path d="M11 2.5C13 3 14 5 13.5 7.5" stroke="#bfe6f4" stroke-width="1.2" fill="none"/><g transform="translate(0 3)"><path d="M4 1L9.5 .5L11 6L5 7Z" fill="#fff" stroke="#8a94b4" stroke-width=".7"/><path d="M1 8L5 5.5L13.5 7L13.5 11L9 14.5L1 12Z" fill="#dfe6f6" stroke="#3a4c8a" stroke-width=".9"/><path d="M1 9.5L9 11.5L13.5 8.5" fill="none" stroke="#3a4c8a" stroke-width=".8"/><path d="M4 12.2L8.5 13.4L11.5 11" stroke="#fff" stroke-width="1.6" fill="none"/></g><path d="M2.5 2.5L9 1L10.5 8.5L4 10Z" fill="#f4cf2c" stroke="#b08a10" stroke-width=".7"/><path d="M5 4.5L5.5 6M7.5 4L8 5.5M5.5 7.8C6.5 8.3 7.5 8 8.3 7.2" stroke="#7a5a10" stroke-width=".8" fill="none"/></g><g transform="translate(163 57)"><path d="M1 6.5L7 4L9.5 13L4 16Z" fill="#eef3f8" stroke="#b8c4d2" stroke-width=".7"/><path d="M4 16L9.5 13L12.5 14L7 17Z" fill="#d0dae6"/><circle cx="10.5" cy="7" r="5.8" fill="#3f9fd0" stroke="#2a6a9a" stroke-width=".6"/><path d="M6 4C8 1.5 12 1 14.5 3" stroke="#3aa860" stroke-width="1.6" fill="none"/><path d="M9.5 2C7.5 5 8 9.5 11 12.5" stroke="#c83a2a" stroke-width="1.5" fill="none"/><path d="M5.5 9.5C9 11 13 10 16 7" stroke="#2d5fa8" stroke-width="1.5" fill="none"/><path d="M12 3.5C13.5 4.5 14.5 6 14.5 7.5" stroke="#cfeefa" stroke-width="1.1" fill="none"/></g><g transform="translate(192 61)"><path d="M0 2.2L9 5.2M0 5.5L9.5 3.5" stroke="#7d8796" stroke-width="1.5"/><path d="M0 2.2L6 4.2M0 5.5L6 4.3" stroke="#c8d0da" stroke-width=".7"/><ellipse cx="12.8" cy="2.6" rx="2.6" ry="2" fill="none" stroke="#1f3f80" stroke-width="1.4" transform="rotate(-20 12.8 2.6)"/><ellipse cx="12.6" cy="7.8" rx="2.7" ry="2.1" fill="none" stroke="#1f3f80" stroke-width="1.4" transform="rotate(25 12.6 7.8)"/></g><g transform="translate(215 59)"><path d="M.5 .5H8L11 3.5V9.5H.5Z" fill="url(#gpage)" stroke="#4d6ea8"/><path d="M4.5 4.5H12.5L15.5 7.5V13.5H4.5Z" fill="url(#gpage)" stroke="#4d6ea8"/><path d="M12.5 4.5V7.5H15.5" fill="none" stroke="#4d6ea8" stroke-width=".8"/></g><g transform="translate(238 57)"><path d="M2 3.5L6.5 1L13.5 4.5L15 9.5L9.5 16L3 14L.8 8Z" fill="#f3e6b0" stroke="#d8b43c" stroke-width="1.5"/><path d="M5 1.6C6 0 8 0 8.6 1.6" fill="#ddd" stroke="#8a8a8a" stroke-width=".8"/><path d="M4 5.5H9.5L12 8V13H4Z" fill="url(#gpage)" stroke="#5d7cb4" stroke-width=".9"/></g><g transform="translate(262 60)"><path d="M7 7.5L14.5 .8" stroke="#c87a3a" stroke-width="2.2" stroke-linecap="round"/><path d="M6 8L14 1.2" stroke="#f0b070" stroke-width=".7"/><path d="M0 12.5C2.5 12 4 10 5.5 7.5L8.2 9.4C6.5 11.5 3.5 13 0 12.5Z" fill="#1c1c24"/></g><g transform="translate(284 57)"><path d="M11.5 .5L16.5 .8L13.8 4.6L17 5L10.5 11.5L12 6.5L9 6.3Z" fill="#f6d42a" stroke="#b8900c" stroke-width=".7"/><rect x="3" y="7" width="9" height="8.5" fill="#f08050" stroke="#274c9c" stroke-width="1.3"/><rect x="4" y="8" width="4" height="3.5" fill="#f6a888" opacity=".8"/><rect x="0" y="13.5" width="3.6" height="3.6" fill="#1d5fb8"/></g><g transform="translate(314 57.5)"><g transform="translate(1 1)"><path d="M14.8 3C9.5 .8 5.8 4.2 6.6 9.2" stroke="#fbfaf6" stroke-width="3.3" fill="none"/><path d="M1.2 8.2L11.6 7.2L6.6 15.6Z" fill="#fbfaf6"/></g><g transform="translate(0 0)"><path d="M14.8 3C9.5 .8 5.8 4.2 6.6 9.2" stroke="#bdbdbd" stroke-width="3.3" fill="none"/><path d="M1.2 8.2L11.6 7.2L6.6 15.6Z" fill="#bdbdbd"/></g></g><path d="M337.5 65 h6 l-3 3.2z" fill="#b8b5a8"/><g transform="translate(366 57.5)"><g transform="scale(-1 1)"><g transform="translate(-1 1)"><path d="M14.8 3C9.5 .8 5.8 4.2 6.6 9.2" stroke="#fbfaf6" stroke-width="3.3" fill="none"/><path d="M1.2 8.2L11.6 7.2L6.6 15.6Z" fill="#fbfaf6"/></g><g transform="translate(0 0)"><path d="M14.8 3C9.5 .8 5.8 4.2 6.6 9.2" stroke="#bdbdbd" stroke-width="3.3" fill="none"/><path d="M1.2 8.2L11.6 7.2L6.6 15.6Z" fill="#bdbdbd"/></g></g></g><path d="M373.5 65 h6 l-3 3.2z" fill="#b8b5a8"/><g transform="translate(391 58)"><path d="M1 4.5L3 3.5L5 7L4.5 2.5L6.5 2L8 6.5L8.5 2.5L10.3 3L10.5 8L12 6L13.5 7L11 12.5L6 13.5L3 10Z" fill="#c8646a" stroke="#9a3c44" stroke-width=".7"/><path d="M6 13.5L11 12.5L14.5 14L13.5 16.5H7.5Z" fill="#274c8c"/><path d="M13.5 .8V7.2M10.3 4H16.7" stroke="#274c8c" stroke-width="1"/><path d="M13.5 -.4L15 1.6H12ZM13.5 8.4L15 6.4H12ZM9.1 4L11.1 2.5V5.5ZM17.9 4L15.9 2.5V5.5Z" fill="#274c8c"/></g><g transform="translate(413 58)"><path d="M9.5 10L15 16" stroke="#b86a3c" stroke-width="2.2" stroke-linecap="round"/><path d="M10.5 10.5L15 15.2" stroke="#5a3a2a" stroke-width=".7"/><circle cx="6.2" cy="6.2" r="5.3" fill="url(#glens)" stroke="#6f7f94" stroke-width="1.4"/><path d="M13 1.5H18M15.5 -1V4M13 6H18" stroke="#223" stroke-width="1.2"/></g><g transform="translate(437 58)"><path d="M9.5 10L15 16" stroke="#b86a3c" stroke-width="2.2" stroke-linecap="round"/><path d="M10.5 10.5L15 15.2" stroke="#5a3a2a" stroke-width=".7"/><circle cx="6.2" cy="6.2" r="5.3" fill="url(#glens)" stroke="#6f7f94" stroke-width="1.4"/><rect x="3.5" y="3.5" width="5.5" height="5.5" fill="#9ab8e0" stroke="#274c9c" stroke-width="1.3"/><path d="M17 13V17H13Z" fill="#000"/></g><g transform="translate(460 58)"><path d="M9.5 10L15 16" stroke="#b86a3c" stroke-width="2.2" stroke-linecap="round"/><path d="M10.5 10.5L15 15.2" stroke="#5a3a2a" stroke-width=".7"/><circle cx="6.2" cy="6.2" r="5.3" fill="url(#glens)" stroke="#6f7f94" stroke-width="1.4"/><path d="M2 2.5L7.5 2V4L11.5 1.5C13 3 12.5 6 10 7.5L8.6 5.5L3.5 8.2Z" fill="#1d3f80"/></g><g transform="translate(488 58)"><rect x="1" y="0" width="2.6" height="3" fill="#e020c0"/><rect x="3.6" y="0" width="2.6" height="3" fill="#3050e0"/><rect x="6.2" y="0" width="2.6" height="3" fill="#20c0c0"/><rect x="8.8" y="0" width="2.6" height="3" fill="#30c030"/><rect x="11.4" y="0" width="2.6" height="3" fill="#e0d020"/><rect x="14" y="0" width="2.5" height="3" fill="#e03020"/><path d="M3 7.5L9 4L15 3.5L16 6L11 7L12.5 8.5L8 11L3.5 10Z" fill="#d8a090" stroke="#8a5a50" stroke-width=".7"/><path d="M1.5 6.5H8M1.5 9H7" stroke="#3a5a9a" stroke-width="1"/><path d="M10.5 15.5L13.3 8L16.2 15.5M11.5 13H15.2" stroke="#111" stroke-width="1.3" fill="none"/><path d="M6.5 11C4 10 2 11.5 4 12.8C6 14 5 15.5 2 15" stroke="#3a5a9a" stroke-width="1.2" fill="none"/></g><g transform="translate(511 58)"><rect x=".7" y=".7" width="16" height="14.5" fill="#f4f8fc" stroke="#1d3f8c" stroke-width="1.4"/><path d="M5.5 1V15" stroke="#1d3f8c" stroke-width="1"/><path d="M2.5 3.5H4M2.5 6.5H4M2.5 9.5H4M2.5 12.5H4" stroke="#b09018" stroke-width="1.4"/><rect x="7.5" y="3" width="2.5" height="2.5" fill="#7a9ad0" stroke="#1d3f8c" stroke-width=".6"/><rect x="12" y="3" width="2.5" height="2.5" fill="#7a9ad0" stroke="#1d3f8c" stroke-width=".6"/><rect x="7.5" y="7" width="2.5" height="2.5" fill="#7a9ad0" stroke="#1d3f8c" stroke-width=".6"/><rect x="12" y="7" width="2.5" height="2.5" fill="#7a9ad0" stroke="#1d3f8c" stroke-width=".6"/><rect x="10.5" y="10.5" width="4" height="3.8" fill="#f0e040" stroke="#555" stroke-width=".7"/></g><g transform="translate(534 58)"><rect x=".7" y=".7" width="9.5" height="14.5" fill="#f4f8fc" stroke="#1d3f8c" stroke-width="1.4"/><rect x="2.5" y="3" width="2.6" height="2.6" fill="#7a9ad0" stroke="#1d3f8c" stroke-width=".6"/><rect x="2.5" y="7" width="2.6" height="2.6" fill="#7a9ad0" stroke="#1d3f8c" stroke-width=".6"/><rect x="2.5" y="11" width="2.6" height="2.6" fill="#7a9ad0" stroke="#1d3f8c" stroke-width=".6"/><path d="M6 4.2H8.5M6 8.2H8.5" stroke="#1d3f8c" stroke-width=".8"/><path d="M8 4C12 2.5 14.5 5 14.5 8.5" fill="none" stroke="#1d3f8c" stroke-width="1.5"/><path d="M12.3 8L14.5 11.5L16.8 8Z" fill="#1d3f8c"/><rect x="12.5" y="11.8" width="4" height="4" fill="#f0e040" stroke="#555" stroke-width=".7"/></g><g transform="translate(558 59)"><rect x="0" y="0" width="17" height="14.5" fill="#6c9cc8"/><path d="M0 0H17V5L0 9Z" fill="#9cbcd8"/><path d="M1 8L12 4.5L15 6.5L4 11Z" fill="#dde6ee" stroke="#8a9aac" stroke-width=".5"/><ellipse cx="13.5" cy="6.6" rx="2" ry="2.6" fill="#b8c4d0" stroke="#7a8a9c" stroke-width=".6"/><path d="M0 12L17 9V14.5H0Z" fill="#4c84b8"/></g><g transform="translate(580 58)"><path d="M5 5H16.5V15.5H5Z" fill="#e8ecf2" stroke="#8894a8" stroke-width=".8"/><path d="M3.5 3.5H15V14H3.5Z" fill="#f2f5f9" stroke="#8894a8" stroke-width=".8"/><path d="M2.5 2C2.5 0 5.5 -.2 6.3 1.2C7.5 -.5 10.5 0 10.3 2.2C12.5 2.5 12.5 5.5 10.6 6C12 7.8 10.5 10 8.5 9.2C8 11.3 5 11.3 4.6 9.4C2.5 10.5 .3 8.5 1.6 6.6C-.5 5.8 0 2.5 2.5 2Z" fill="#fbeaea" stroke="#d8202c" stroke-width="1.5"/></g><g transform="translate(605 58)"><rect x=".5" y=".3" width="13" height="15.2" rx="1" fill="#161616"/><rect x="2" y="1.8" width="10" height="3.2" fill="#5a9a6a"/><rect x="2.0" y="6.6" width="2.4" height="1.9" fill="#e04030"/><rect x="2.0" y="9.6" width="2.4" height="1.9" fill="#fff"/><rect x="2.0" y="12.6" width="2.4" height="1.9" fill="#fff"/><rect x="5.6" y="6.6" width="2.4" height="1.9" fill="#fff"/><rect x="5.6" y="9.6" width="2.4" height="1.9" fill="#fff"/><rect x="5.6" y="12.6" width="2.4" height="1.9" fill="#fff"/><rect x="9.2" y="6.6" width="2.4" height="1.9" fill="#fff"/><rect x="9.2" y="9.6" width="2.4" height="1.9" fill="#fff"/><rect x="9.2" y="12.6" width="2.4" height="1.9" fill="#fff"/></g><g transform="translate(634 59)"><rect x=".4" y=".4" width="15.6" height="13.6" rx="2.2" fill="url(#ghelp)" stroke="#163a84" stroke-width=".8"/></g><text transform="translate(637.6 71.6)" fill="#fff" style="font-family:'Liberation Sans',monospace;font-size:14px;font-weight:bold;" xml:space="preserve" >?</text><g transform="translate(674 57)"><path d="M1 13.5L6.5 .8H8L13 13.5M3 9.5H11" stroke="#111" stroke-width="1.7" fill="none"/><path d="M9.5 13L15.5 6.5" stroke="#d8783a" stroke-width="2" stroke-linecap="round"/><path d="M5.5 16.5C7.5 16 8.5 15 9.3 13L11 14.3C10 16 8 17 5.5 16.5Z" fill="#222"/></g><g transform="translate(823 57)"><path d="M.5 12V18M17.5 12V18M1 15H17" stroke="#111" stroke-width="1"/><path d="M1 15L4 13.5V16.5ZM17 15L14 13.5V16.5Z" fill="#111"/><path d="M8 10L16 1" stroke="#d8783a" stroke-width="2" stroke-linecap="round"/><path d="M3.5 13.5C5.5 13.2 7 12 8 10L10 11.4C9 13 6.5 14.2 3.5 13.5Z" fill="#222"/></g><g transform="translate(972 57)"><rect x=".5" y="3.5" width="12" height="11" fill="#fff" stroke="#274c9c"/><rect x=".5" y="3.5" width="12" height="3" fill="#3a66b8"/><path d="M.5 10H12.5M4.5 6.5V14.5M8.5 6.5V14.5" stroke="#274c9c" stroke-width=".9"/><path d="M9 9L15.5 1.5" stroke="#d8783a" stroke-width="2" stroke-linecap="round"/><path d="M5 12.5C7 12.2 8 11 9 9L10.8 10.4C10 12 7.5 13.2 5 12.5Z" fill="#222"/></g><g transform="translate(194 86)"><rect x="0" y="0" width="16" height="15.5" fill="#3b6cb2"/><g transform="translate(8 7.8)"><rect x="-2.3" y="-7.4" width="4.6" height="4" fill="#e9eef6" transform="rotate(0)"/><rect x="-2.3" y="-7.4" width="4.6" height="4" fill="#e9eef6" transform="rotate(45)"/><rect x="-2.3" y="-7.4" width="4.6" height="4" fill="#e9eef6" transform="rotate(90)"/><rect x="-2.3" y="-7.4" width="4.6" height="4" fill="#e9eef6" transform="rotate(135)"/><rect x="-2.3" y="-7.4" width="4.6" height="4" fill="#e9eef6" transform="rotate(180)"/><rect x="-2.3" y="-7.4" width="4.6" height="4" fill="#e9eef6" transform="rotate(225)"/><rect x="-2.3" y="-7.4" width="4.6" height="4" fill="#e9eef6" transform="rotate(270)"/><rect x="-2.3" y="-7.4" width="4.6" height="4" fill="#e9eef6" transform="rotate(315)"/><circle r="5.3" fill="#e9eef6"/><rect x="-1.5" y="-6.6" width="3" height="3.2" fill="#3a3d44" transform="rotate(0)"/><rect x="-1.5" y="-6.6" width="3" height="3.2" fill="#3a3d44" transform="rotate(45)"/><rect x="-1.5" y="-6.6" width="3" height="3.2" fill="#3a3d44" transform="rotate(90)"/><rect x="-1.5" y="-6.6" width="3" height="3.2" fill="#3a3d44" transform="rotate(135)"/><rect x="-1.5" y="-6.6" width="3" height="3.2" fill="#3a3d44" transform="rotate(180)"/><rect x="-1.5" y="-6.6" width="3" height="3.2" fill="#3a3d44" transform="rotate(225)"/><rect x="-1.5" y="-6.6" width="3" height="3.2" fill="#3a3d44" transform="rotate(270)"/><rect x="-1.5" y="-6.6" width="3" height="3.2" fill="#3a3d44" transform="rotate(315)"/><circle r="4.5" fill="#3a3d44"/><circle r="2.6" fill="#f2f6fb"/><circle r="1.7" fill="#4a88cc"/></g></g><g transform="translate(217 86)"><rect x=".5" y=".5" width="15" height="15" fill="none" stroke="#555" stroke-width="1" stroke-dasharray="2 1.5"/><path d="M2 8L7.5 2.5L14 8V14.5H2.5Z" fill="#14161c"/><rect x="3" y="0" width="2" height="4" fill="#ece9d8"/><rect x="10.5" y="0" width="2" height="3" fill="#ece9d8"/></g><g transform="translate(258 87)"><path d="M0 9L8 6L16 9L8 12.5Z" fill="#e4ecf6" stroke="#5a7cb8" stroke-width=".7"/><path d="M0 6L8 3L16 6L8 9.5Z" fill="#c2d4ec" stroke="#3a5c9c" stroke-width=".7"/><path d="M0 3L8 0L16 3L8 6.5Z" fill="#9ab6de" stroke="#3a5c9c" stroke-width=".7"/></g><g transform="translate(285 86)"><path d="M5 0C1.8 0 0 2.2 0 4.8C0 7 1.8 8 2.4 10H7.6C8.2 8 10 7 10 4.8C10 2.2 8.2 0 5 0Z" fill="#fdf6b8" stroke="#b8a040" stroke-width=".8"/><path d="M3 3C3.5 1.8 5 1.5 6 2" stroke="#fff" stroke-width="1.2" fill="none"/><rect x="2.6" y="10.3" width="4.8" height="3.6" fill="#6878a8" stroke="#3a4878" stroke-width=".6"/></g><g transform="translate(299 87)"><circle cx="6.5" cy="6.5" r="5.8" fill="#f7e45c" stroke="#2a6a9c" stroke-width="1.4"/><path d="M10 11L12.5 13.5" stroke="#d8c030" stroke-width="1.5"/></g><g transform="translate(315 86)"><rect x="6.5" y="6.5" width="8.5" height="8" fill="#dfe8f4" stroke="#7088b0" stroke-width=".9"/><g transform="translate(6 6)"><rect x="-1.2" y="-5.6" width="2.4" height="2.4" fill="#6088c0" transform="rotate(0)"/><rect x="-1.2" y="-5.6" width="2.4" height="2.4" fill="#6088c0" transform="rotate(45)"/><rect x="-1.2" y="-5.6" width="2.4" height="2.4" fill="#6088c0" transform="rotate(90)"/><rect x="-1.2" y="-5.6" width="2.4" height="2.4" fill="#6088c0" transform="rotate(135)"/><rect x="-1.2" y="-5.6" width="2.4" height="2.4" fill="#6088c0" transform="rotate(180)"/><rect x="-1.2" y="-5.6" width="2.4" height="2.4" fill="#6088c0" transform="rotate(225)"/><rect x="-1.2" y="-5.6" width="2.4" height="2.4" fill="#6088c0" transform="rotate(270)"/><rect x="-1.2" y="-5.6" width="2.4" height="2.4" fill="#6088c0" transform="rotate(315)"/><circle r="4" fill="#8fb0dc" stroke="#4a70b0" stroke-width=".8"/><circle r="1.8" fill="#e8f0c0"/></g></g><g transform="translate(333 85)"><path d="M1.5 7V4C1.5 1.5 3 .8 4.5 .8C6 .8 7.3 1.8 7.3 4" fill="none" stroke="#c8b020" stroke-width="1.8"/><rect x="5" y="6" width="8.5" height="8.5" rx="1" fill="#e8d84c" stroke="#a89018" stroke-width=".9"/><path d="M6.5 8.5H12M6.5 10.5H12M6.5 12.5H12" stroke="#c0ac28" stroke-width=".8"/></g><rect x="349.5" y="89.5" width="10" height="10" fill="#fff" stroke="#000" stroke-width="1.6"/><g transform="translate(581 85)"><path d="M0 9L8 6L16 9L8 12.5Z" fill="#eadc50" stroke="#5a7cb8" stroke-width=".7"/><path d="M0 6L8 3L16 6L8 9.5Z" fill="#c0d2ec" stroke="#3a5c9c" stroke-width=".7"/><path d="M0 3L8 0L16 3L8 6.5Z" fill="#7ea4d8" stroke="#3a5c9c" stroke-width=".7"/><path d="M0 16L4.5 11.5M4.8 14.5V11.2H1.5" stroke="#1d3f80" stroke-width="1.3" fill="none"/></g><g transform="translate(604 86)"><path d="M0 11L8 8L16 11L8 14.5Z" fill="#d4e0f0" stroke="#5a7cb8" stroke-width=".7"/><path d="M0 8L8 5L16 8L8 11.5Z" fill="#b8cce8" stroke="#3a5c9c" stroke-width=".7"/><path d="M0 5L8 2L16 5L8 8.5Z" fill="#9cb8e0" stroke="#3a5c9c" stroke-width=".7"/><path d="M5 7C4 3 7 0 10.5 1C13 2 13.5 5 12 7" fill="none" stroke="#2a5ca8" stroke-width="1.8"/><path d="M2.5 5L5.2 9.2L8 5.5Z" fill="#2a5ca8"/></g><g transform="translate(628 86)"><path d="M0 9L8 6L16 9L8 12.5Z" fill="#c8d8ee" stroke="#5a7cb8" stroke-width=".7"/><path d="M0 6L8 3L16 6L8 9.5Z" fill="#a8c0e4" stroke="#3a5c9c" stroke-width=".7"/><path d="M0 3L8 0L16 3L8 6.5Z" fill="#7ea4d8" stroke="#3a5c9c" stroke-width=".7"/><rect x="6.5" y="7.5" width="10" height="8.5" fill="#e8f0fa" stroke="#2a5ca8" stroke-width="1.2"/><rect x="6.5" y="7.5" width="10" height="2.4" fill="#2a5ca8"/><path d="M8.5 12.5H14.5" stroke="#2a5ca8" stroke-width="1"/></g><g transform="translate(0 0)"><path d="M9 134L20.5 123.5" stroke="#111" stroke-width="1.5"/><rect x="7.5" y="132.5" width="3" height="3" fill="#1f6fb4" stroke="#0d4a88" stroke-width=".5"/><rect x="19.0" y="122.0" width="3" height="3" fill="#1f6fb4" stroke="#0d4a88" stroke-width=".5"/></g><g transform="translate(0 0)"><path d="M8.5 157L21 145" stroke="#111" stroke-width="1.5"/><path d="M6.5 159L8 154.5L11 157.5ZM23 143L21.5 147.5L18.5 144.5Z" fill="#111"/><rect x="13.5" y="149.0" width="3" height="3" fill="#1f6fb4" stroke="#0d4a88" stroke-width=".5"/></g><g transform="translate(0 0)"><path d="M8.5 176H17.5" stroke="#111" stroke-width="1.5"/><path d="M17.5 176C23.5 176 23.5 168.5 17.5 168.5" fill="none" stroke="#3a3a4a" stroke-width="1.4"/><rect x="7.0" y="174.5" width="3" height="3" fill="#1f6fb4" stroke="#0d4a88" stroke-width=".5"/><rect x="16.0" y="174.5" width="3" height="3" fill="#1f6fb4" stroke="#0d4a88" stroke-width=".5"/><rect x="16.0" y="167.0" width="3" height="3" fill="#1f6fb4" stroke="#0d4a88" stroke-width=".5"/></g><g transform="translate(0 0)"><path d="M15 187L22 192.3L19.3 200.5H10.7L8 192.3Z" fill="url(#gblue)" stroke="#222" stroke-width="1.4"/></g><g transform="translate(0 0)"><rect x="8.5" y="214" width="12.5" height="8" fill="url(#gblue)" stroke="#222" stroke-width="1.4"/><rect x="19.5" y="212.5" width="3" height="3" fill="#1f6fb4" stroke="#0d4a88" stroke-width=".5"/><rect x="7.0" y="220.5" width="3" height="3" fill="#1f6fb4" stroke="#0d4a88" stroke-width=".5"/></g><g transform="translate(0 0)"><path d="M8 245C8.5 238 14 233 21.5 232.5" fill="none" stroke="#222" stroke-width="1.4"/><rect x="6.5" y="243.5" width="3" height="3" fill="#1f6fb4" stroke="#0d4a88" stroke-width=".5"/><rect x="11.1" y="234.8" width="3" height="3" fill="#1f6fb4" stroke="#0d4a88" stroke-width=".5"/><rect x="20.0" y="231.0" width="3" height="3" fill="#1f6fb4" stroke="#0d4a88" stroke-width=".5"/></g><g transform="translate(0 0)"><circle cx="14.5" cy="261" r="6.6" fill="url(#gblue)" stroke="#222" stroke-width="1.5"/><path d="M14.5 261L19.5 256" stroke="#222" stroke-width="1.2"/><rect x="13.0" y="259.5" width="3" height="3" fill="#1f6fb4" stroke="#0d4a88" stroke-width=".5"/></g><g transform="translate(0 0)"><path d="M10 279C9 276.5 12.5 275 14 277C15.5 274.5 19.5 275.5 19 278.5C22 278 23.5 281.5 21.5 283.5C23.5 286 21 289.5 18 288C17 290.5 13 290.5 12.5 287.5C9.5 288.5 7 285.5 9 283C6.5 281.5 7.5 278.5 10 279Z" fill="url(#gblue)" stroke="#222" stroke-width="1.4"/></g><g transform="translate(0 0)"><path d="M8 312.5C9 305 12 302.5 14.5 305.5C17 308.5 20 307 21.5 299.5" fill="none" stroke="#222" stroke-width="1.4"/></g><g transform="translate(0 0)"><ellipse cx="14.5" cy="327.5" rx="6.5" ry="4.6" fill="url(#gblue)" stroke="#222" stroke-width="1.5"/><rect x="6.5" y="326.0" width="3" height="3" fill="#1f6fb4" stroke="#0d4a88" stroke-width=".5"/><rect x="19.5" y="326.0" width="3" height="3" fill="#1f6fb4" stroke="#0d4a88" stroke-width=".5"/><rect x="13.0" y="321.5" width="3" height="3" fill="#1f6fb4" stroke="#0d4a88" stroke-width=".5"/></g><g transform="translate(0 0)"><path d="M8 350C7 345 13 343 17.5 344.5C22.5 346 22.5 352 14.5 353.5" fill="none" stroke="#222" stroke-width="1.5"/><rect x="6.5" y="348.5" width="3" height="3" fill="#1f6fb4" stroke="#0d4a88" stroke-width=".5"/><rect x="13.0" y="352.0" width="3" height="3" fill="#1f6fb4" stroke="#0d4a88" stroke-width=".5"/></g><g transform="translate(0 0)"><path d="M12 363.5H19L22.5 367V375.5H12Z" fill="#eef3f8" stroke="#a8b4c4" stroke-width=".8"/><rect x="8" y="367" width="10" height="7" fill="#f0e68c" stroke="#2a5a9c" stroke-width="1.2"/><circle cx="16" cy="376" r="3.6" fill="#f0e68c" stroke="#2a5a9c" stroke-width="1.2"/><path d="M23.5 374.5V378.5H19.5Z" fill="#000"/><rect x="6.5" y="371.5" width="3" height="3" fill="#1f6fb4" stroke="#0d4a88" stroke-width=".5"/></g><g transform="translate(0 0)"><rect x="10" y="389" width="9.5" height="7" fill="#f0e68c" stroke="#2a5a9c" stroke-width="1.2"/><circle cx="17.5" cy="397.5" r="3.7" fill="#f0e68c" stroke="#2a5a9c" stroke-width="1.2"/><rect x="8.0" y="393.5" width="3" height="3" fill="#1f6fb4" stroke="#0d4a88" stroke-width=".5"/></g><g transform="translate(0 0)"><rect x="13.7" y="414.2" width="2.6" height="2.6" fill="#1f6fb4" stroke="#0d4a88" stroke-width=".5"/></g><g transform="translate(0 0)"><clipPath id="hc"><rect x="10" y="432" width="10" height="10"/></clipPath><path d="M8 438L16 430M8 442L20 430M10 444L22 432M14 444L22 436M6 434L12 428M18 446L24 440" stroke="#5a6a8a" stroke-width="1.3" clip-path="url(#hc)"/><path d="M7.5 432H22.5M7.5 442H22.5M10 429.5V444.5M20 429.5V444.5" stroke="#1d3a70" stroke-width="1.5"/></g><g transform="translate(0 0)"><rect x="10" y="454" width="10" height="10" fill="url(#ggrad)"/><path d="M7.5 454H22.5M7.5 464H22.5M10 451.5V466.5M20 451.5V466.5" stroke="#12161e" stroke-width="1.7"/></g><g transform="translate(0 0)"><path d="M7.8 475.5H17L22.5 481V487.5H7.8Z" fill="url(#gpage)" stroke="#2a5a9c" stroke-width="1.3"/><circle cx="14" cy="481.5" r="2.8" fill="#eef2f6" stroke="#4a5a6c" stroke-width="1.1"/></g><g transform="translate(0 0)"><rect x="8.5" y="496" width="13" height="12" fill="#fff" stroke="#3a66b8" stroke-width="1.2"/><rect x="8.5" y="496" width="13" height="3.4" fill="#3a66b8"/><path d="M8.5 503.7H21.5M12.8 499.4V508M17.2 499.4V508" stroke="#5a82cc" stroke-width="1.1"/></g><text transform="translate(8.3 530.6)" fill="#111" style="font-family:'Liberation Sans',monospace;font-size:17.5px;font-weight:normal;" xml:space="preserve" >A</text><g transform="translate(0 0)"><path d="M994 135.5H1010" stroke="#222" stroke-width="1.2"/><path d="M998.5 132L1008 122.5L1011 125.5L1001.5 135Z" fill="#e8d040" stroke="#a89018" stroke-width=".6"/><path d="M998.5 132L1002 128.5L1005 131.5L1001.5 135Z" fill="#e8f0f8" stroke="#6a7a9a" stroke-width=".6"/><path d="M996.8 133.5L998.5 132L1001.5 135L1000 136.2C998.5 137 996 135 996.8 133.5Z" fill="#e88c8c" stroke="#a84c4c" stroke-width=".6"/></g><g transform="translate(0 0)"><circle cx="997" cy="146.5" r="3" fill="#e8eef6" stroke="#222" stroke-width="1.3"/><circle cx="1007.5" cy="154.5" r="3.3" fill="#e8eef6" stroke="#222" stroke-width="1.3"/><circle cx="1003.5" cy="154.5" r="3.3" fill="#e8eef6" stroke="#222" stroke-width="1.3"/><path d="M1000.5 144.5C1003.5 143 1006.5 144.5 1007 147.5" fill="none" stroke="#1d4f90" stroke-width="1.6"/><path d="M1004.5 147L1007.3 150.5L1009.5 146.5Z" fill="#1d4f90"/></g><g transform="translate(0 0)"><path d="M994.5 178.5H1000V166Z" fill="url(#gblue)" stroke="#222" stroke-width="1.2"/><path d="M1009 178.5H1003.5V166Z" fill="url(#gblue)" stroke="#222" stroke-width="1.2"/><path d="M1001.7 164V181.5" stroke="#2a6aac" stroke-width="1.2"/></g><g transform="translate(0 0)"><path d="M1009 201.5H998C994 201.5 993.5 196.5 997 195.5C998.5 195 999 194 999 192.5C999 188.5 1005 188.5 1005 192.5C1005 194.5 1006 195.5 1009 195.5" fill="none" stroke="#222" stroke-width="1.4"/><path d="M1009 198.6H998.5C997 198.6 997 197.6 998.5 197.4C1001 196.8 1002 195 1002 192.5" fill="none" stroke="#2a6aac" stroke-width="1.2"/></g><rect x="994.5" y="209.5" width="6" height="6" fill="url(#gblue)" stroke="#222" stroke-width="1.3"/><rect x="1003.5" y="209.5" width="6" height="6" fill="url(#gblue)" stroke="#222" stroke-width="1.3"/><rect x="994.5" y="218.5" width="6" height="6" fill="url(#gblue)" stroke="#222" stroke-width="1.3"/><rect x="1003.5" y="218.5" width="6" height="6" fill="url(#gblue)" stroke="#222" stroke-width="1.3"/><g transform="translate(1002 239)"><path d="M0 -8.5L3.2 -4.8H1.2V-1.2H4.8V-3.2L8.5 0L4.8 3.2V1.2H1.2V4.8H3.2L0 8.5L-3.2 4.8H-1.2V1.2H-4.8V3.2L-8.5 0L-4.8 -3.2V-1.2H-1.2V-4.8H-3.2Z" fill="#2d5f94"/></g><g transform="translate(1002.5 261.5)"><path d="M-3.5 -5.2A6.3 6.3 0 1 1 -6.2 -1" fill="none" stroke="#2d5f94" stroke-width="2.4"/><path d="M-7.5 -7.5L-1.2 -6.8L-5.8 -1.8Z" fill="#2d5f94"/></g><g transform="translate(0 0)"><rect x="994.5" y="276" width="15" height="14.5" fill="url(#gblue)" stroke="#8a9ab0" stroke-width="1"/><rect x="994.5" y="282.5" width="7.5" height="8" fill="#eef2f8" stroke="#111" stroke-width="1.3" stroke-dasharray="1.2 1.2"/></g><g transform="translate(0 0)"><path d="M1000.5 298.5L1009.5 312.5H1000.5Z" fill="url(#gblue)" stroke="#222" stroke-width="1.2"/><path d="M999 298.5H994.5V312.5H999" fill="#e8eef6" stroke="#111" stroke-width="1.5"/><path d="M1000.3 299V312" stroke="#111" stroke-width="1.2" stroke-dasharray="1.2 1.2"/></g><g transform="translate(0 0)"><path d="M994 326.5H1000" stroke="#111" stroke-width="1.5"/><path d="M1001.5 326.5H1010.5" stroke="#111" stroke-width="1.2" stroke-dasharray="2 1.5"/><path d="M997.5 332.5L1003.5 320.5" stroke="#2a6aac" stroke-width="1.4"/></g><g transform="translate(0 0)"><path d="M994 349.5H1003" stroke="#111" stroke-width="1.4" stroke-dasharray="3 1.5"/><path d="M1003.5 354.5L1009.5 344" stroke="#2a6aac" stroke-width="1.5"/></g><g transform="translate(0 0)"><rect x="994.5" y="366.5" width="15" height="10" fill="url(#gblue)" stroke="#111" stroke-width="1.4"/><rect x="1002.4" y="364.4" width="3.2" height="3.2" fill="#1f6fb4" stroke="#0d4a88" stroke-width=".5"/></g><g transform="translate(0 0)"><path d="M997 389H994.5V398.5H1009.5V389H1007" fill="url(#gblue)" stroke="#111" stroke-width="1.4"/><rect x="995.9" y="386.9" width="3.2" height="3.2" fill="#1f6fb4" stroke="#0d4a88" stroke-width=".5"/><rect x="1004.9" y="386.9" width="3.2" height="3.2" fill="#1f6fb4" stroke="#0d4a88" stroke-width=".5"/></g><g transform="translate(0 0)"><path d="M994 415.5H1010.5" stroke="#111" stroke-width="1.8"/><path d="M998.5 412L1002.2 415.5L998.5 419ZM1006 412L1002.2 415.5L1006 419Z" fill="#2d5f94"/></g><g transform="translate(0 0)"><path d="M1001.5 430H1010.5M994.7 437.5V444.5" stroke="#111" stroke-width="1.5"/><path d="M994.7 430.3H1001M994.7 430.3V437" stroke="#111" stroke-width="1.2" stroke-dasharray="1.2 1.2"/><path d="M994.7 437.5L1001.5 430" stroke="#2a6aac" stroke-width="1.5"/></g><g transform="translate(0 0)"><path d="M1002 452H1010.5M994.7 459.5V466.5" stroke="#111" stroke-width="1.5"/><path d="M994.7 452.3H1001.5M994.7 452.3V459" stroke="#111" stroke-width="1.2" stroke-dasharray="1.2 1.2"/><path d="M994.7 460C995 455.5 998 452.5 1002.5 452" fill="none" stroke="#2a6aac" stroke-width="1.5"/></g><g transform="translate(0 0)"><path d="M996 487L1003 478.5L1006 481L999 489.5C997 490.5 995 489 996 487Z" fill="#d83020" stroke="#8a1810" stroke-width=".6"/><path d="M1004.5 479.5L1008.5 474.5" stroke="#555" stroke-width="1"/><path d="M1008.5 474.5L1010.5 472M1007 473.5L1005.5 472M1009.5 476L1011.5 476.5" stroke="#8a9ad0" stroke-width="1"/><path d="M994.5 480L997.5 482.5L994 484L997.5 485.5M999.5 478L1000 481M1003 485L1006 486.5L1002.5 487.5" stroke="#e8c020" stroke-width="1.2" fill="none"/></g><rect x="1000" y="518.5" width="10" height="10" fill="url(#gblue)" stroke="#5a7ab0" stroke-width="1"/><rect x="994.5" y="513" width="10" height="10" fill="#4c70a8" stroke="#2d4f88" stroke-width="1"/><rect x="994.5" y="535" width="9" height="9" fill="url(#gblue)" stroke="#5a7ab0"/><rect x="998" y="539" width="9" height="9" fill="#4c70a8" stroke="#2d4f88"/><rect x="1002" y="543.5" width="8" height="8" fill="url(#gblue)" stroke="#5a7ab0"/><rect x="998.5" y="562" width="11.5" height="11.5" fill="url(#gblue)" stroke="#5a7ab0"/><rect x="994.5" y="557" width="12.5" height="12.5" fill="#4c70a8" stroke="#2d4f88"/><rect x="994.5" y="579" width="12.5" height="12.5" fill="#4c70a8" stroke="#2d4f88"/><rect x="999" y="584" width="11" height="11" fill="url(#gblue)" stroke="#5a7ab0"/><g transform="translate(848 716)"><path d="M1 14L4.5 5L8 14M2.5 10.5H6.5" stroke="#2a5aa8" stroke-width="1.3" fill="none"/><path d="M3 15L9 9" stroke="#2a5aa8" stroke-width="1"/><circle cx="10.5" cy="4.5" r="3.6" fill="#f8e860" stroke="#c0a020" stroke-width=".7"/><rect x="9.2" y="8" width="2.6" height="2" fill="#8a8a8a"/></g><g transform="translate(872 716)"><path d="M1 14L4.5 5L8 14M2.5 10.5H6.5" stroke="#9a9a9a" stroke-width="1.3" fill="none"/><path d="M4 15.5L13 3" stroke="#8a8a8a" stroke-width="1.1"/><path d="M10.5 2L13 .5L14.5 3.5L12 5.5Z" fill="#b8b8b8" stroke="#7a7a7a" stroke-width=".6"/></g><g transform="translate(900 716)"><path d="M1.5 15.5L9 6.5C8 3.5 10 1 13 1.2L10.8 3.6L12 5.2L14.8 3.6C15 6.5 12.5 8.2 10.5 7.8L3.5 16.5Z" fill="#f2f2f2" stroke="#555" stroke-width="1"/></g><g transform="translate(920 716)"><path d="M8.5 8V4.5C8.5 2 10 .8 12 .8C14 .8 15.5 2 15.5 4.5V5.5" fill="none" stroke="#5a4a08" stroke-width="2.6"/><path d="M8.5 8V4.5C8.5 2 10 .8 12 .8C14 .8 15.5 2 15.5 4.5V5.5" fill="none" stroke="#e8c428" stroke-width="1.3"/><rect x="2" y="7.5" width="11.5" height="9" rx="1.2" fill="#dcb424" stroke="#4a3c08" stroke-width="1"/><path d="M3.5 10H12M3.5 12H12M3.5 14H12" stroke="#6a560c" stroke-width=".9"/><path d="M3.5 9H12" stroke="#f8e878" stroke-width=".8"/></g><g transform="translate(940 716)"><rect x=".7" y=".7" width="9.6" height="15" fill="#e8f0fa" stroke="#2a5ca8" stroke-width="1.3"/><path d="M5.5 2V10M2.5 6L5.5 3L8.5 6" stroke="#2a5ca8" stroke-width="1.3" fill="none"/><circle cx="12" cy="12" r="4.8" fill="#30a848" stroke="#1a7830" stroke-width=".6"/><path d="M9.6 12L11.4 13.8L14.4 10.2" stroke="#fff" stroke-width="1.5" fill="none"/></g><rect x="1014" y="30" width="4" height="706" fill="#0f5ae6"/><rect x="1016.5" y="30" width="1.5" height="706" fill="#0a40d0"/><rect x="1014" y="30" width="1" height="706" fill="#0a4cdc"/><path d="M0 0H6A6 6 0 0 0 0 6Z" fill="#0c43b4"/><path d="M1018 0H1012A6 6 0 0 1 1018 6Z" fill="#0c43b4"/>
</svg>
</div></body></html>
